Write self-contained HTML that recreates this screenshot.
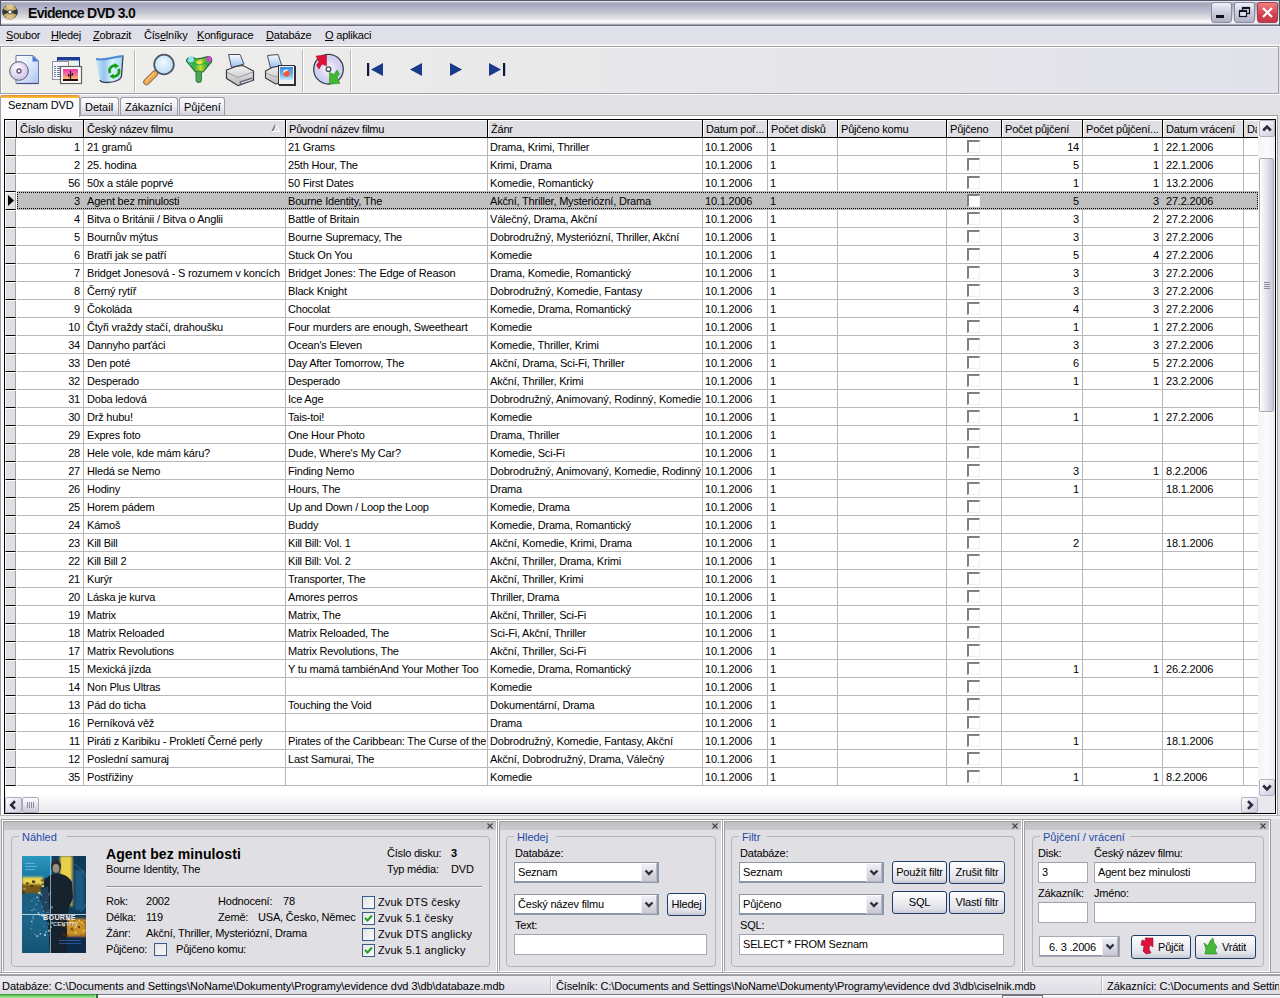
<!DOCTYPE html><html><head><meta charset="utf-8"><title>Evidence DVD 3.0</title><style>
html,body{margin:0;padding:0;}
body{width:1280px;height:998px;overflow:hidden;position:relative;background:#E0DFE3;font-family:"Liberation Sans",sans-serif;font-size:11px;color:#000;}
.a{position:absolute;box-sizing:border-box;}
.t{position:absolute;white-space:pre;line-height:normal;font-size:11px;letter-spacing:-0.2px;}
.u{text-decoration:underline;}

</style></head><body>
<div class="a" style="left:0px;top:0px;width:1280px;height:26px;background:linear-gradient(#555568 0,#555568 1px,#E8E8F5 1px,#E8E8F5 2px,#B8B8C8 2px,#A5A5BB 4px,#B0B0C8 7px,#C0C4D0 12px,#D0D4D8 15px,#E0E0E4 18px,#F0F0F4 20px,#FFFFFF 22px,#D8D8E0 24px,#6F6F7F 25px,#6F6F7F 26px);"></div>
<div class="a" style="left:0px;top:0px;width:1px;height:26px;background:#505868;"></div>
<div class="a" style="left:1279px;top:0px;width:1px;height:26px;background:#406060;"></div>
<svg class="a" style="left:2px;top:4px" width="16" height="16" viewBox="0 0 16 16"><circle cx="8" cy="8" r="7.3" fill="#C8B070" stroke="#404040" stroke-width=".6"/><path d="M8 8 L1 5 A7.3 7.3 0 0 0 1 11 Z M8 8 L15 5 A7.3 7.3 0 0 1 15 11 Z" fill="#303838"/><path d="M8 8 L4 1.5 A7.3 7.3 0 0 1 12 1.5 Z" fill="#E0C890"/><path d="M8 8 L4 14.5 A7.3 7.3 0 0 0 12 14.5 Z" fill="#D8C088"/><circle cx="8" cy="8" r="2" fill="#fff" stroke="#303030" stroke-width=".8"/></svg>
<div class="t " style="left:28px;top:5px;font-size:14px;font-weight:700;color:#0A0A0A;letter-spacing:-0.7px;">Evidence DVD 3.0</div>
<div class="a" style="left:1211px;top:2px;width:21px;height:21px;border-radius:3px;border:1px solid #8A8AA0;background:linear-gradient(#F0F0F8,#D0D0E0 45%,#B0B0C4);"></div>
<div class="a" style="left:1216px;top:15px;width:8px;height:3px;background:#101020;"></div>
<div class="a" style="left:1234px;top:2px;width:21px;height:21px;border-radius:3px;border:1px solid #8A8AA0;background:linear-gradient(#F0F0F8,#D0D0E0 45%,#B0B0C4);"></div>
<svg class="a" style="left:1234px;top:2px" width="21" height="21"><rect x="8.5" y="5.5" width="7" height="6" fill="none" stroke="#101020" stroke-width="1.2"/><path d="M8.5 6 H15.5" stroke="#101020" stroke-width="2"/><rect x="5.5" y="8.5" width="7" height="6" fill="#E0E0EA" stroke="#101020" stroke-width="1.2"/><path d="M5.5 9 H12.5" stroke="#101020" stroke-width="2"/></svg>
<div class="a" style="left:1257px;top:2px;width:21px;height:21px;border-radius:3px;border:1px solid #A04050;background:linear-gradient(#F08080,#D04050 60%,#C83848);"></div>
<svg class="a" style="left:1257px;top:2px" width="21" height="21"><path d="M6 6 L15 15 M15 6 L6 15" stroke="#fff" stroke-width="2.2"/></svg>
<div class="a" style="left:0px;top:26px;width:1280px;height:20px;background:linear-gradient(#E8E8F0 0,#E8E8F0 1px,#E0E0EA 1px,#E0E0E8 18px,#F8F8F8 19px);"></div>
<div class="t" style="left:6px;top:29px;"><span class="u">S</span>oubor</div>
<div class="t" style="left:51px;top:29px;"><span class="u">H</span>ledej</div>
<div class="t" style="left:93px;top:29px;"><span class="u">Z</span>obrazit</div>
<div class="t" style="left:144px;top:29px;">Čís<span class="u">e</span>lníky</div>
<div class="t" style="left:197px;top:29px;"><span class="u">K</span>onfigurace</div>
<div class="t" style="left:266px;top:29px;"><span class="u">D</span>atabáze</div>
<div class="t" style="left:325px;top:29px;"><span class="u">O</span> aplikaci</div>
<div class="a" style="left:0px;top:46px;width:1279px;height:48px;background:linear-gradient(90deg,#EFEFEB,#E9E9EA 40%,#E1E1EA);border:1px solid #A0A0A8;border-top-color:#A0A0A8;"></div>
<div class="a" style="left:1px;top:47px;width:1277px;height:1px;background:#FFFFFF;"></div>
<div class="a" style="left:1px;top:47px;width:1px;height:46px;background:#FFFFFF;"></div>
<div class="a" style="left:0px;top:94px;width:1280px;height:1px;background:#FFFFFF;"></div>
<div class="a" style="left:134px;top:50px;width:1px;height:42px;background:#B8B8B8;"></div>
<div class="a" style="left:135px;top:50px;width:1px;height:42px;background:#FFFFFF;"></div>
<div class="a" style="left:302px;top:50px;width:1px;height:42px;background:#B8B8B8;"></div>
<div class="a" style="left:303px;top:50px;width:1px;height:42px;background:#FFFFFF;"></div>
<div class="a" style="left:350px;top:50px;width:1px;height:42px;background:#B8B8B8;"></div>
<div class="a" style="left:351px;top:50px;width:1px;height:42px;background:#FFFFFF;"></div>
<svg class="a" style="left:0;top:0" width="520" height="94" viewBox="0 0 520 94">
<defs>
<linearGradient id="pg" x1="0" y1="0" x2="1" y2="1"><stop offset="0" stop-color="#FFFFFF"/><stop offset=".5" stop-color="#DDE8FA"/><stop offset="1" stop-color="#A8C4F0"/></linearGradient>
<radialGradient id="cd" cx=".4" cy=".35" r=".7"><stop offset="0" stop-color="#FFFFFF"/><stop offset=".5" stop-color="#E4DCF4"/><stop offset="1" stop-color="#C8C0E0"/></radialGradient>
<linearGradient id="ph" x1="0" y1="0" x2="0" y2="1"><stop offset="0" stop-color="#E83CA8"/><stop offset=".45" stop-color="#F070A0"/><stop offset=".75" stop-color="#F8B060"/><stop offset="1" stop-color="#F8F090"/></linearGradient>
<linearGradient id="bin" x1="0" y1="0" x2="1" y2="0"><stop offset="0" stop-color="#C8E8FA"/><stop offset=".3" stop-color="#98C4F0"/><stop offset=".6" stop-color="#D8F4FC"/><stop offset="1" stop-color="#A8D4F4"/></linearGradient>
<radialGradient id="lens" cx=".45" cy=".4" r=".6"><stop offset="0" stop-color="#F0FAFF"/><stop offset="1" stop-color="#B8DCF8"/></radialGradient>
<linearGradient id="fun" x1="0" y1="0" x2="1" y2="0"><stop offset="0" stop-color="#60D8F0"/><stop offset=".3" stop-color="#30B040"/><stop offset=".55" stop-color="#C8D830"/><stop offset=".8" stop-color="#30B040"/><stop offset="1" stop-color="#C040C0"/></linearGradient>
<linearGradient id="pap" x1="0" y1="0" x2="0" y2="1"><stop offset="0" stop-color="#F8FAFF"/><stop offset="1" stop-color="#98C0F0"/></linearGradient>
<linearGradient id="prn" x1="0" y1="0" x2="0" y2="1"><stop offset="0" stop-color="#F4F4F4"/><stop offset="1" stop-color="#B8B8B8"/></linearGradient>
<radialGradient id="dvd" cx=".5" cy=".5" r=".55"><stop offset="0" stop-color="#FFFFFF"/><stop offset=".6" stop-color="#D8D0F0"/><stop offset="1" stop-color="#C0D4F4"/></radialGradient>
</defs>
<!-- icon1: CD document -->
<path d="M16 55.5 L33 55.5 L38.5 61 L38.5 83.5 L16 83.5 Z" fill="url(#pg)" stroke="#6878A8" stroke-width="1"/>
<path d="M32.5 55.5 L32.5 61.5 L38.5 61.5 Z" fill="#4A78D0"/>
<path d="M17 83.5 L38.5 83.5" stroke="#4A4A90" stroke-width="1.2"/>
<circle cx="19" cy="71" r="9.3" fill="url(#cd)" stroke="#5A5A68" stroke-width="1"/>
<circle cx="19" cy="71" r="2" fill="#fff" stroke="#6A5A78" stroke-width="1.4"/>
<!-- icon2: report/photo -->
<rect x="57.5" y="57.5" width="22" height="10" fill="#E8F4E8" stroke="#1E3C96" stroke-width="1"/>
<rect x="57.5" y="57.5" width="22" height="3" fill="#1E3C96"/>
<rect x="52.5" y="61.5" width="16" height="18" fill="#F8F8FC" stroke="#909098" stroke-width="1"/>
<path d="M54 66.5 H56 M57 66.5 H61 M54 68.5 H56 M57 68.5 H61 M54 70.5 H56 M57 70.5 H60 M54 72.5 H56 M57 72.5 H60 M54 74.5 H56 M57 74.5 H60 M54 76.5 H56 M57 76.5 H60" stroke="#6A80B0" stroke-width="1"/>
<rect x="60.5" y="66.5" width="21" height="17" fill="#FFFFFF" stroke="#606060" stroke-width="1.2"/>
<rect x="63" y="69" width="15" height="12" fill="url(#ph)"/>
<rect x="63" y="79" width="15" height="2" fill="#200808"/>
<path d="M70.5 71 V79 M68.5 74 V76 H70.5 M72.5 73 V75 H70.5" stroke="#3A1020" stroke-width="1.2" fill="none"/>
<!-- icon3: recycle bin -->
<path d="M96 59 C104 60 112 54 123 55.5 L121.5 76 C121 80 114 82.5 107 82.5 C103 82.5 100.5 81.5 100 80 Z" fill="url(#bin)"/>
<path d="M123 55.5 L121.5 76 C121 80 114 82.5 107 82.5 C103 82.5 100.5 81.5 100 80" fill="none" stroke="#3A4050" stroke-width="1.3"/>
<path d="M96 59 C104 61 112 57 123 56" fill="none" stroke="#5088D8" stroke-width="2"/>
<path d="M110 73 A5.2 5.2 0 0 1 116 65.8" fill="none" stroke="#10A010" stroke-width="2.6"/>
<path d="M118.5 69 A5.2 5.2 0 0 1 112.5 76.3" fill="none" stroke="#10A010" stroke-width="2.6"/>
<path d="M114.5 63 L119 66 L115 68.5 Z" fill="#10A010"/>
<path d="M114 79 L109.5 76.5 L113.5 73.5 Z" fill="#10A010"/>
<!-- icon4: magnifier -->
<path d="M155 73.5 L146.5 82" stroke="#806050" stroke-width="6.5" stroke-linecap="round"/>
<path d="M155 73.5 L146.5 82" stroke="#F0A848" stroke-width="4.8" stroke-linecap="round"/>
<path d="M154 73 L146 81" stroke="#F8D088" stroke-width="1.2" stroke-linecap="round"/>
<circle cx="164" cy="64.5" r="9.8" fill="url(#lens)" stroke="#505868" stroke-width="1.8"/>
<!-- icon5: funnel -->
<path d="M186.5 61 C187 57 192 56.5 195 58.5 C200 60 205 57 208 56.5 C211 56.5 212.5 59 211.5 62 L203 72 L195.5 72 Z" fill="url(#fun)" stroke="#1E6A28" stroke-width="1.1"/>
<path d="M189 62 C195 65 204 65 210 61" fill="none" stroke="#30B040" stroke-width="2"/>
<rect x="196" y="71" width="5.5" height="11.5" rx="2.2" fill="#48A858" stroke="#2E7040" stroke-width=".9"/>
<circle cx="191" cy="59.5" r="3" fill="#90E4F8"/>
<circle cx="209" cy="59" r="2.8" fill="#C848C8"/>
<ellipse cx="199.5" cy="62.5" rx="3.2" ry="1.8" fill="#E8E040"/>
<!-- icon6: printer -->
<path d="M228.5 54.5 L240 54.5 L244 64 L231.5 67.5 Z" fill="url(#pap)" stroke="#4A5060" stroke-width="1"/>
<path d="M226.5 70 L236 66.5 L243 65.5 L253.5 71 L253.5 80 L238 85.5 L226.5 78.5 Z" fill="url(#prn)" stroke="#38383E" stroke-width="1.2"/>
<path d="M227 72.5 L238 77.5 L253 72" fill="none" stroke="#9A9AA4" stroke-width="1"/>
<path d="M238 77.5 L238 85" stroke="#C8C8C8" stroke-width="1"/>
<path d="M239.5 81.5 L252 77.5 L252.5 80.5 L240 84.5 Z" fill="#6A6478"/>
<path d="M241 83 L252 79.5" stroke="#F4F4F8" stroke-width="1"/>
<!-- icon7: print preview -->
<path d="M267.5 55.5 L278 54.5 L282 66 L270.5 68 Z" fill="url(#pap)" stroke="#4A5060" stroke-width="1"/>
<path d="M265.5 71 L272 67.5 L280 66 L280 83 L275.5 84 L265.5 78 Z" fill="url(#prn)" stroke="#38383E" stroke-width="1.1"/>
<path d="M266 73 L275 77 L279 76" fill="none" stroke="#A0A0A8" stroke-width="1"/>
<rect x="279" y="66" width="17" height="20" fill="#303036"/>
<rect x="278.5" y="65.5" width="16" height="19" fill="#F0F0F0" stroke="#303038" stroke-width="1"/>
<linearGradient id="pv" x1="0" y1="0" x2="0" y2="1"><stop offset="0" stop-color="#3A88DC"/><stop offset=".6" stop-color="#70B8F0"/><stop offset="1" stop-color="#C8ECFA"/></linearGradient>
<rect x="280" y="67" width="13" height="13" fill="url(#pv)"/>
<circle cx="286.5" cy="73.5" r="3.2" fill="#F05A3C"/>
<path d="M283.5 72.5 A3 3 0 0 1 287.5 70.5" fill="none" stroke="#FFFFFF" stroke-width="1.4"/>
<!-- icon8: DVD -->
<circle cx="328.5" cy="69.2" r="14.8" fill="url(#dvd)" stroke="#404048" stroke-width="1.3"/>
<path d="M316 56 L326.5 55 L326.5 66 L322 64 L319 69 L316.5 65 L319 62 Z" fill="#E0103C" stroke="#A00828" stroke-width=".5"/>
<path d="M340 83.5 L329.5 84 L329.5 72.5 L334 74.5 L337 70 L339.5 74 L337 77 Z" fill="#40B830" stroke="#208018" stroke-width=".5"/>
<circle cx="328.5" cy="69.2" r="2.3" fill="#fff" stroke="#405058" stroke-width="1.4"/>
<!-- nav -->
<rect x="367" y="63" width="2.2" height="13" fill="#101838"/>
<path d="M371 69.5 L383 63 L383 76 Z" fill="#1A3A8A"/>
<path d="M410 69.5 L422 63 L422 76 Z" fill="#1A3A8A"/>
<path d="M450 63 L462 69.5 L450 76 Z" fill="#1A3A8A"/>
<path d="M489 63 L501 69.5 L489 76 Z" fill="#1A3A8A"/>
<rect x="503" y="63" width="2.2" height="13" fill="#101838"/>
</svg>
<div class="a" style="left:1px;top:95px;width:1278px;height:20px;background:#E1E1E3;"></div>
<div class="a" style="left:80px;top:97px;width:39px;height:19px;border:1px solid #9C9CA8;border-bottom:none;border-radius:3px 3px 0 0;background:linear-gradient(#FFFFFF,#F0F0F4 45%,#D0D0DE);"></div>
<div class="t " style="left:85px;top:101px;letter-spacing:0px;">Detail</div>
<div class="a" style="left:120px;top:97px;width:58px;height:19px;border:1px solid #9C9CA8;border-bottom:none;border-radius:3px 3px 0 0;background:linear-gradient(#FFFFFF,#F0F0F4 45%,#D0D0DE);"></div>
<div class="t " style="left:125px;top:101px;letter-spacing:0px;">Zákazníci</div>
<div class="a" style="left:179px;top:97px;width:46px;height:19px;border:1px solid #9C9CA8;border-bottom:none;border-radius:3px 3px 0 0;background:linear-gradient(#FFFFFF,#F0F0F4 45%,#D0D0DE);"></div>
<div class="t " style="left:184px;top:101px;letter-spacing:0px;">Půjčení</div>
<div class="a" style="left:0px;top:115px;width:1278px;height:701px;background:#FCFCFE;border:1px solid #A0A0A0;border-bottom:none;"></div>
<div class="a" style="left:0px;top:95px;width:80px;height:22px;border:1px solid #A0A0A0;border-bottom:none;border-radius:3px 3px 0 0;background:#FCFCFE;"></div>
<div class="a" style="left:1px;top:95px;width:78px;height:3px;background:linear-gradient(#E68B2C,#FFC73C);border-radius:2px 2px 0 0;"></div>
<div class="t " style="left:8px;top:99px;letter-spacing:-0.1px;">Seznam DVD</div>
<div class="a" style="left:4px;top:119px;width:1272px;height:695px;border:1px solid #000;background:#FFFFFF;"></div>
<div class="a" style="left:5px;top:120px;width:1253px;height:17px;background:#E0DFE3;"></div>
<div class="a" style="left:5px;top:120px;width:1253px;height:1px;background:#FFFFFF;"></div>
<div class="a" style="left:5px;top:137px;width:1253px;height:1px;background:#000;"></div>
<div class="a" style="left:5px;top:120px;width:1px;height:17px;background:#FFFFFF;"></div>
<div class="a" style="left:16px;top:120px;width:1px;height:17px;background:#000;"></div>
<div class="a" style="left:17px;top:121px;width:1px;height:16px;background:#FFFFFF;"></div>
<div class="a" style="left:83px;top:120px;width:1px;height:17px;background:#000;"></div>
<div class="a" style="left:84px;top:121px;width:1px;height:16px;background:#FFFFFF;"></div>
<div class="a" style="left:285px;top:120px;width:1px;height:17px;background:#000;"></div>
<div class="a" style="left:286px;top:121px;width:1px;height:16px;background:#FFFFFF;"></div>
<div class="a" style="left:487px;top:120px;width:1px;height:17px;background:#000;"></div>
<div class="a" style="left:488px;top:121px;width:1px;height:16px;background:#FFFFFF;"></div>
<div class="a" style="left:702px;top:120px;width:1px;height:17px;background:#000;"></div>
<div class="a" style="left:703px;top:121px;width:1px;height:16px;background:#FFFFFF;"></div>
<div class="a" style="left:767px;top:120px;width:1px;height:17px;background:#000;"></div>
<div class="a" style="left:768px;top:121px;width:1px;height:16px;background:#FFFFFF;"></div>
<div class="a" style="left:837px;top:120px;width:1px;height:17px;background:#000;"></div>
<div class="a" style="left:838px;top:121px;width:1px;height:16px;background:#FFFFFF;"></div>
<div class="a" style="left:946px;top:120px;width:1px;height:17px;background:#000;"></div>
<div class="a" style="left:947px;top:121px;width:1px;height:16px;background:#FFFFFF;"></div>
<div class="a" style="left:1001px;top:120px;width:1px;height:17px;background:#000;"></div>
<div class="a" style="left:1002px;top:121px;width:1px;height:16px;background:#FFFFFF;"></div>
<div class="a" style="left:1082px;top:120px;width:1px;height:17px;background:#000;"></div>
<div class="a" style="left:1083px;top:121px;width:1px;height:16px;background:#FFFFFF;"></div>
<div class="a" style="left:1162px;top:120px;width:1px;height:17px;background:#000;"></div>
<div class="a" style="left:1163px;top:121px;width:1px;height:16px;background:#FFFFFF;"></div>
<div class="a" style="left:1243px;top:120px;width:1px;height:17px;background:#000;"></div>
<div class="t" style="left:20px;top:123px;width:62px;overflow:hidden;">Číslo disku</div>
<div class="t" style="left:87px;top:123px;width:197px;overflow:hidden;">Český název filmu</div>
<div class="t" style="left:289px;top:123px;width:197px;overflow:hidden;">Původní název filmu</div>
<div class="t" style="left:491px;top:123px;width:210px;overflow:hidden;">Žánr</div>
<div class="t" style="left:706px;top:123px;width:60px;overflow:hidden;">Datum poř...</div>
<div class="t" style="left:771px;top:123px;width:65px;overflow:hidden;">Počet disků</div>
<div class="t" style="left:841px;top:123px;width:104px;overflow:hidden;">Půjčeno komu</div>
<div class="t" style="left:950px;top:123px;width:50px;overflow:hidden;">Půjčeno</div>
<div class="t" style="left:1005px;top:123px;width:76px;overflow:hidden;">Počet půjčení</div>
<div class="t" style="left:1086px;top:123px;width:75px;overflow:hidden;">Počet půjčení...</div>
<div class="t" style="left:1166px;top:123px;width:76px;overflow:hidden;">Datum vrácení</div>
<div class="t" style="left:1247px;top:123px;width:10px;overflow:hidden;">Da</div>
<svg class="a" style="left:271px;top:124px" width="10" height="9"><path d="M1 7.5 L4.5 0.5" stroke="#606068" stroke-width="1.1"/><path d="M4.5 0.5 L8.5 7.5 L1 7.5" fill="none" stroke="#FFFFFF" stroke-width="1.1"/></svg>
<div class="a" style="left:83px;top:138px;width:1px;height:648px;background:#B8B8B8;"></div>
<div class="a" style="left:285px;top:138px;width:1px;height:648px;background:#B8B8B8;"></div>
<div class="a" style="left:487px;top:138px;width:1px;height:648px;background:#B8B8B8;"></div>
<div class="a" style="left:702px;top:138px;width:1px;height:648px;background:#B8B8B8;"></div>
<div class="a" style="left:767px;top:138px;width:1px;height:648px;background:#B8B8B8;"></div>
<div class="a" style="left:837px;top:138px;width:1px;height:648px;background:#B8B8B8;"></div>
<div class="a" style="left:946px;top:138px;width:1px;height:648px;background:#B8B8B8;"></div>
<div class="a" style="left:1001px;top:138px;width:1px;height:648px;background:#B8B8B8;"></div>
<div class="a" style="left:1082px;top:138px;width:1px;height:648px;background:#B8B8B8;"></div>
<div class="a" style="left:1162px;top:138px;width:1px;height:648px;background:#B8B8B8;"></div>
<div class="a" style="left:1243px;top:138px;width:1px;height:648px;background:#B8B8B8;"></div>
<div class="a" style="left:17px;top:155px;width:1241px;height:1px;background:#B8B8B8;"></div>
<div class="a" style="left:5px;top:138px;width:11px;height:18px;background:#E0DFE3;border-left:1px solid #fff;border-top:1px solid #fff;border-right:1px solid #A0A0A0;border-bottom:1px solid #000;"></div>
<div class="t" style="right:1200px;top:141px;text-align:right;">1</div>
<div class="t" style="left:87px;top:141px;width:197px;overflow:hidden;">21 gramů</div>
<div class="t" style="left:288px;top:141px;width:198px;overflow:hidden;">21 Grams</div>
<div class="t" style="left:490px;top:141px;width:211px;overflow:hidden;">Drama, Krimi, Thriller</div>
<div class="t " style="left:705px;top:141px;">10.1.2006</div>
<div class="t " style="left:770px;top:141px;">1</div>
<div class="a" style="left:967px;top:140px;width:13px;height:13px;border-top:2px solid #808080;border-left:2px solid #808080;border-right:1px solid #F0F0F0;border-bottom:1px solid #F0F0F0;background:#FFFFFF;"></div>
<div class="t" style="right:201px;top:141px;text-align:right;">14</div>
<div class="t" style="right:121px;top:141px;text-align:right;">1</div>
<div class="t " style="left:1166px;top:141px;">22.1.2006</div>
<div class="a" style="left:17px;top:173px;width:1241px;height:1px;background:#B8B8B8;"></div>
<div class="a" style="left:5px;top:156px;width:11px;height:18px;background:#E0DFE3;border-left:1px solid #fff;border-top:1px solid #fff;border-right:1px solid #A0A0A0;border-bottom:1px solid #000;"></div>
<div class="t" style="right:1200px;top:159px;text-align:right;">2</div>
<div class="t" style="left:87px;top:159px;width:197px;overflow:hidden;">25. hodina</div>
<div class="t" style="left:288px;top:159px;width:198px;overflow:hidden;">25th Hour, The</div>
<div class="t" style="left:490px;top:159px;width:211px;overflow:hidden;">Krimi, Drama</div>
<div class="t " style="left:705px;top:159px;">10.1.2006</div>
<div class="t " style="left:770px;top:159px;">1</div>
<div class="a" style="left:967px;top:158px;width:13px;height:13px;border-top:2px solid #808080;border-left:2px solid #808080;border-right:1px solid #F0F0F0;border-bottom:1px solid #F0F0F0;background:#FFFFFF;"></div>
<div class="t" style="right:201px;top:159px;text-align:right;">5</div>
<div class="t" style="right:121px;top:159px;text-align:right;">1</div>
<div class="t " style="left:1166px;top:159px;">22.1.2006</div>
<div class="a" style="left:17px;top:191px;width:1241px;height:1px;background:#B8B8B8;"></div>
<div class="a" style="left:5px;top:174px;width:11px;height:18px;background:#E0DFE3;border-left:1px solid #fff;border-top:1px solid #fff;border-right:1px solid #A0A0A0;border-bottom:1px solid #000;"></div>
<div class="t" style="right:1200px;top:177px;text-align:right;">56</div>
<div class="t" style="left:87px;top:177px;width:197px;overflow:hidden;">50x a stále poprvé</div>
<div class="t" style="left:288px;top:177px;width:198px;overflow:hidden;">50 First Dates</div>
<div class="t" style="left:490px;top:177px;width:211px;overflow:hidden;">Komedie, Romantický</div>
<div class="t " style="left:705px;top:177px;">10.1.2006</div>
<div class="t " style="left:770px;top:177px;">1</div>
<div class="a" style="left:967px;top:176px;width:13px;height:13px;border-top:2px solid #808080;border-left:2px solid #808080;border-right:1px solid #F0F0F0;border-bottom:1px solid #F0F0F0;background:#FFFFFF;"></div>
<div class="t" style="right:201px;top:177px;text-align:right;">1</div>
<div class="t" style="right:121px;top:177px;text-align:right;">1</div>
<div class="t " style="left:1166px;top:177px;">13.2.2006</div>
<div class="a" style="left:17px;top:209px;width:1241px;height:1px;background:#B8B8B8;"></div>
<div class="a" style="left:5px;top:192px;width:11px;height:18px;background:#E0DFE3;border-left:1px solid #fff;border-top:1px solid #fff;border-right:1px solid #A0A0A0;border-bottom:1px solid #000;"></div>
<div class="a" style="left:17px;top:192px;width:1241px;height:17px;background:#C0C0C0;"></div>
<div class="a" style="left:17px;top:192px;width:1241px;height:1px;background:repeating-linear-gradient(90deg,#000 0,#000 1px,transparent 1px,transparent 2px);"></div>
<div class="a" style="left:17px;top:208px;width:1241px;height:1px;background:repeating-linear-gradient(90deg,#000 0,#000 1px,transparent 1px,transparent 2px);"></div>
<div class="a" style="left:17px;top:192px;width:1px;height:17px;background:repeating-linear-gradient(180deg,#000 0,#000 1px,transparent 1px,transparent 2px);"></div>
<div class="a" style="left:1257px;top:192px;width:1px;height:17px;background:repeating-linear-gradient(180deg,#000 0,#000 1px,transparent 1px,transparent 2px);"></div>
<svg class="a" style="left:7px;top:194px" width="9" height="14"><path d="M1 1 L7 6.5 L1 12Z" fill="#000"/></svg>
<div class="t" style="right:1200px;top:195px;text-align:right;">3</div>
<div class="t" style="left:87px;top:195px;width:197px;overflow:hidden;">Agent bez minulosti</div>
<div class="t" style="left:288px;top:195px;width:198px;overflow:hidden;">Bourne Identity, The</div>
<div class="t" style="left:490px;top:195px;width:211px;overflow:hidden;">Akční, Thriller, Mysteriózní, Drama</div>
<div class="t " style="left:705px;top:195px;">10.1.2006</div>
<div class="t " style="left:770px;top:195px;">1</div>
<div class="a" style="left:967px;top:194px;width:13px;height:13px;border-top:2px solid #808080;border-left:2px solid #808080;border-right:1px solid #F0F0F0;border-bottom:1px solid #F0F0F0;background:#FFFFFF;"></div>
<div class="t" style="right:201px;top:195px;text-align:right;">5</div>
<div class="t" style="right:121px;top:195px;text-align:right;">3</div>
<div class="t " style="left:1166px;top:195px;">27.2.2006</div>
<div class="a" style="left:17px;top:227px;width:1241px;height:1px;background:#B8B8B8;"></div>
<div class="a" style="left:5px;top:210px;width:11px;height:18px;background:#E0DFE3;border-left:1px solid #fff;border-top:1px solid #fff;border-right:1px solid #A0A0A0;border-bottom:1px solid #000;"></div>
<div class="t" style="right:1200px;top:213px;text-align:right;">4</div>
<div class="t" style="left:87px;top:213px;width:197px;overflow:hidden;">Bitva o Británii / Bitva o Anglii</div>
<div class="t" style="left:288px;top:213px;width:198px;overflow:hidden;">Battle of Britain</div>
<div class="t" style="left:490px;top:213px;width:211px;overflow:hidden;">Válečný, Drama, Akční</div>
<div class="t " style="left:705px;top:213px;">10.1.2006</div>
<div class="t " style="left:770px;top:213px;">1</div>
<div class="a" style="left:967px;top:212px;width:13px;height:13px;border-top:2px solid #808080;border-left:2px solid #808080;border-right:1px solid #F0F0F0;border-bottom:1px solid #F0F0F0;background:#FFFFFF;"></div>
<div class="t" style="right:201px;top:213px;text-align:right;">3</div>
<div class="t" style="right:121px;top:213px;text-align:right;">2</div>
<div class="t " style="left:1166px;top:213px;">27.2.2006</div>
<div class="a" style="left:17px;top:245px;width:1241px;height:1px;background:#B8B8B8;"></div>
<div class="a" style="left:5px;top:228px;width:11px;height:18px;background:#E0DFE3;border-left:1px solid #fff;border-top:1px solid #fff;border-right:1px solid #A0A0A0;border-bottom:1px solid #000;"></div>
<div class="t" style="right:1200px;top:231px;text-align:right;">5</div>
<div class="t" style="left:87px;top:231px;width:197px;overflow:hidden;">Bournův mýtus</div>
<div class="t" style="left:288px;top:231px;width:198px;overflow:hidden;">Bourne Supremacy, The</div>
<div class="t" style="left:490px;top:231px;width:211px;overflow:hidden;">Dobrodružný, Mysteriózní, Thriller, Akční</div>
<div class="t " style="left:705px;top:231px;">10.1.2006</div>
<div class="t " style="left:770px;top:231px;">1</div>
<div class="a" style="left:967px;top:230px;width:13px;height:13px;border-top:2px solid #808080;border-left:2px solid #808080;border-right:1px solid #F0F0F0;border-bottom:1px solid #F0F0F0;background:#FFFFFF;"></div>
<div class="t" style="right:201px;top:231px;text-align:right;">3</div>
<div class="t" style="right:121px;top:231px;text-align:right;">3</div>
<div class="t " style="left:1166px;top:231px;">27.2.2006</div>
<div class="a" style="left:17px;top:263px;width:1241px;height:1px;background:#B8B8B8;"></div>
<div class="a" style="left:5px;top:246px;width:11px;height:18px;background:#E0DFE3;border-left:1px solid #fff;border-top:1px solid #fff;border-right:1px solid #A0A0A0;border-bottom:1px solid #000;"></div>
<div class="t" style="right:1200px;top:249px;text-align:right;">6</div>
<div class="t" style="left:87px;top:249px;width:197px;overflow:hidden;">Bratři jak se patří</div>
<div class="t" style="left:288px;top:249px;width:198px;overflow:hidden;">Stuck On You</div>
<div class="t" style="left:490px;top:249px;width:211px;overflow:hidden;">Komedie</div>
<div class="t " style="left:705px;top:249px;">10.1.2006</div>
<div class="t " style="left:770px;top:249px;">1</div>
<div class="a" style="left:967px;top:248px;width:13px;height:13px;border-top:2px solid #808080;border-left:2px solid #808080;border-right:1px solid #F0F0F0;border-bottom:1px solid #F0F0F0;background:#FFFFFF;"></div>
<div class="t" style="right:201px;top:249px;text-align:right;">5</div>
<div class="t" style="right:121px;top:249px;text-align:right;">4</div>
<div class="t " style="left:1166px;top:249px;">27.2.2006</div>
<div class="a" style="left:17px;top:281px;width:1241px;height:1px;background:#B8B8B8;"></div>
<div class="a" style="left:5px;top:264px;width:11px;height:18px;background:#E0DFE3;border-left:1px solid #fff;border-top:1px solid #fff;border-right:1px solid #A0A0A0;border-bottom:1px solid #000;"></div>
<div class="t" style="right:1200px;top:267px;text-align:right;">7</div>
<div class="t" style="left:87px;top:267px;width:197px;overflow:hidden;">Bridget Jonesová - S rozumem v koncích</div>
<div class="t" style="left:288px;top:267px;width:198px;overflow:hidden;">Bridget Jones: The Edge of Reason</div>
<div class="t" style="left:490px;top:267px;width:211px;overflow:hidden;">Drama, Komedie, Romantický</div>
<div class="t " style="left:705px;top:267px;">10.1.2006</div>
<div class="t " style="left:770px;top:267px;">1</div>
<div class="a" style="left:967px;top:266px;width:13px;height:13px;border-top:2px solid #808080;border-left:2px solid #808080;border-right:1px solid #F0F0F0;border-bottom:1px solid #F0F0F0;background:#FFFFFF;"></div>
<div class="t" style="right:201px;top:267px;text-align:right;">3</div>
<div class="t" style="right:121px;top:267px;text-align:right;">3</div>
<div class="t " style="left:1166px;top:267px;">27.2.2006</div>
<div class="a" style="left:17px;top:299px;width:1241px;height:1px;background:#B8B8B8;"></div>
<div class="a" style="left:5px;top:282px;width:11px;height:18px;background:#E0DFE3;border-left:1px solid #fff;border-top:1px solid #fff;border-right:1px solid #A0A0A0;border-bottom:1px solid #000;"></div>
<div class="t" style="right:1200px;top:285px;text-align:right;">8</div>
<div class="t" style="left:87px;top:285px;width:197px;overflow:hidden;">Černý rytíř</div>
<div class="t" style="left:288px;top:285px;width:198px;overflow:hidden;">Black Knight</div>
<div class="t" style="left:490px;top:285px;width:211px;overflow:hidden;">Dobrodružný, Komedie, Fantasy</div>
<div class="t " style="left:705px;top:285px;">10.1.2006</div>
<div class="t " style="left:770px;top:285px;">1</div>
<div class="a" style="left:967px;top:284px;width:13px;height:13px;border-top:2px solid #808080;border-left:2px solid #808080;border-right:1px solid #F0F0F0;border-bottom:1px solid #F0F0F0;background:#FFFFFF;"></div>
<div class="t" style="right:201px;top:285px;text-align:right;">3</div>
<div class="t" style="right:121px;top:285px;text-align:right;">3</div>
<div class="t " style="left:1166px;top:285px;">27.2.2006</div>
<div class="a" style="left:17px;top:317px;width:1241px;height:1px;background:#B8B8B8;"></div>
<div class="a" style="left:5px;top:300px;width:11px;height:18px;background:#E0DFE3;border-left:1px solid #fff;border-top:1px solid #fff;border-right:1px solid #A0A0A0;border-bottom:1px solid #000;"></div>
<div class="t" style="right:1200px;top:303px;text-align:right;">9</div>
<div class="t" style="left:87px;top:303px;width:197px;overflow:hidden;">Čokoláda</div>
<div class="t" style="left:288px;top:303px;width:198px;overflow:hidden;">Chocolat</div>
<div class="t" style="left:490px;top:303px;width:211px;overflow:hidden;">Komedie, Drama, Romantický</div>
<div class="t " style="left:705px;top:303px;">10.1.2006</div>
<div class="t " style="left:770px;top:303px;">1</div>
<div class="a" style="left:967px;top:302px;width:13px;height:13px;border-top:2px solid #808080;border-left:2px solid #808080;border-right:1px solid #F0F0F0;border-bottom:1px solid #F0F0F0;background:#FFFFFF;"></div>
<div class="t" style="right:201px;top:303px;text-align:right;">4</div>
<div class="t" style="right:121px;top:303px;text-align:right;">3</div>
<div class="t " style="left:1166px;top:303px;">27.2.2006</div>
<div class="a" style="left:17px;top:335px;width:1241px;height:1px;background:#B8B8B8;"></div>
<div class="a" style="left:5px;top:318px;width:11px;height:18px;background:#E0DFE3;border-left:1px solid #fff;border-top:1px solid #fff;border-right:1px solid #A0A0A0;border-bottom:1px solid #000;"></div>
<div class="t" style="right:1200px;top:321px;text-align:right;">10</div>
<div class="t" style="left:87px;top:321px;width:197px;overflow:hidden;">Čtyři vraždy stačí, drahoušku</div>
<div class="t" style="left:288px;top:321px;width:198px;overflow:hidden;">Four murders are enough, Sweetheart</div>
<div class="t" style="left:490px;top:321px;width:211px;overflow:hidden;">Komedie</div>
<div class="t " style="left:705px;top:321px;">10.1.2006</div>
<div class="t " style="left:770px;top:321px;">1</div>
<div class="a" style="left:967px;top:320px;width:13px;height:13px;border-top:2px solid #808080;border-left:2px solid #808080;border-right:1px solid #F0F0F0;border-bottom:1px solid #F0F0F0;background:#FFFFFF;"></div>
<div class="t" style="right:201px;top:321px;text-align:right;">1</div>
<div class="t" style="right:121px;top:321px;text-align:right;">1</div>
<div class="t " style="left:1166px;top:321px;">27.2.2006</div>
<div class="a" style="left:17px;top:353px;width:1241px;height:1px;background:#B8B8B8;"></div>
<div class="a" style="left:5px;top:336px;width:11px;height:18px;background:#E0DFE3;border-left:1px solid #fff;border-top:1px solid #fff;border-right:1px solid #A0A0A0;border-bottom:1px solid #000;"></div>
<div class="t" style="right:1200px;top:339px;text-align:right;">34</div>
<div class="t" style="left:87px;top:339px;width:197px;overflow:hidden;">Dannyho parťáci</div>
<div class="t" style="left:288px;top:339px;width:198px;overflow:hidden;">Ocean&#x27;s Eleven</div>
<div class="t" style="left:490px;top:339px;width:211px;overflow:hidden;">Komedie, Thriller, Krimi</div>
<div class="t " style="left:705px;top:339px;">10.1.2006</div>
<div class="t " style="left:770px;top:339px;">1</div>
<div class="a" style="left:967px;top:338px;width:13px;height:13px;border-top:2px solid #808080;border-left:2px solid #808080;border-right:1px solid #F0F0F0;border-bottom:1px solid #F0F0F0;background:#FFFFFF;"></div>
<div class="t" style="right:201px;top:339px;text-align:right;">3</div>
<div class="t" style="right:121px;top:339px;text-align:right;">3</div>
<div class="t " style="left:1166px;top:339px;">27.2.2006</div>
<div class="a" style="left:17px;top:371px;width:1241px;height:1px;background:#B8B8B8;"></div>
<div class="a" style="left:5px;top:354px;width:11px;height:18px;background:#E0DFE3;border-left:1px solid #fff;border-top:1px solid #fff;border-right:1px solid #A0A0A0;border-bottom:1px solid #000;"></div>
<div class="t" style="right:1200px;top:357px;text-align:right;">33</div>
<div class="t" style="left:87px;top:357px;width:197px;overflow:hidden;">Den poté</div>
<div class="t" style="left:288px;top:357px;width:198px;overflow:hidden;">Day After Tomorrow, The</div>
<div class="t" style="left:490px;top:357px;width:211px;overflow:hidden;">Akční, Drama, Sci-Fi, Thriller</div>
<div class="t " style="left:705px;top:357px;">10.1.2006</div>
<div class="t " style="left:770px;top:357px;">1</div>
<div class="a" style="left:967px;top:356px;width:13px;height:13px;border-top:2px solid #808080;border-left:2px solid #808080;border-right:1px solid #F0F0F0;border-bottom:1px solid #F0F0F0;background:#FFFFFF;"></div>
<div class="t" style="right:201px;top:357px;text-align:right;">6</div>
<div class="t" style="right:121px;top:357px;text-align:right;">5</div>
<div class="t " style="left:1166px;top:357px;">27.2.2006</div>
<div class="a" style="left:17px;top:389px;width:1241px;height:1px;background:#B8B8B8;"></div>
<div class="a" style="left:5px;top:372px;width:11px;height:18px;background:#E0DFE3;border-left:1px solid #fff;border-top:1px solid #fff;border-right:1px solid #A0A0A0;border-bottom:1px solid #000;"></div>
<div class="t" style="right:1200px;top:375px;text-align:right;">32</div>
<div class="t" style="left:87px;top:375px;width:197px;overflow:hidden;">Desperado</div>
<div class="t" style="left:288px;top:375px;width:198px;overflow:hidden;">Desperado</div>
<div class="t" style="left:490px;top:375px;width:211px;overflow:hidden;">Akční, Thriller, Krimi</div>
<div class="t " style="left:705px;top:375px;">10.1.2006</div>
<div class="t " style="left:770px;top:375px;">1</div>
<div class="a" style="left:967px;top:374px;width:13px;height:13px;border-top:2px solid #808080;border-left:2px solid #808080;border-right:1px solid #F0F0F0;border-bottom:1px solid #F0F0F0;background:#FFFFFF;"></div>
<div class="t" style="right:201px;top:375px;text-align:right;">1</div>
<div class="t" style="right:121px;top:375px;text-align:right;">1</div>
<div class="t " style="left:1166px;top:375px;">23.2.2006</div>
<div class="a" style="left:17px;top:407px;width:1241px;height:1px;background:#B8B8B8;"></div>
<div class="a" style="left:5px;top:390px;width:11px;height:18px;background:#E0DFE3;border-left:1px solid #fff;border-top:1px solid #fff;border-right:1px solid #A0A0A0;border-bottom:1px solid #000;"></div>
<div class="t" style="right:1200px;top:393px;text-align:right;">31</div>
<div class="t" style="left:87px;top:393px;width:197px;overflow:hidden;">Doba ledová</div>
<div class="t" style="left:288px;top:393px;width:198px;overflow:hidden;">Ice Age</div>
<div class="t" style="left:490px;top:393px;width:211px;overflow:hidden;">Dobrodružný, Animovaný, Rodinný, Komedie</div>
<div class="t " style="left:705px;top:393px;">10.1.2006</div>
<div class="t " style="left:770px;top:393px;">1</div>
<div class="a" style="left:967px;top:392px;width:13px;height:13px;border-top:2px solid #808080;border-left:2px solid #808080;border-right:1px solid #F0F0F0;border-bottom:1px solid #F0F0F0;background:#FFFFFF;"></div>
<div class="a" style="left:17px;top:425px;width:1241px;height:1px;background:#B8B8B8;"></div>
<div class="a" style="left:5px;top:408px;width:11px;height:18px;background:#E0DFE3;border-left:1px solid #fff;border-top:1px solid #fff;border-right:1px solid #A0A0A0;border-bottom:1px solid #000;"></div>
<div class="t" style="right:1200px;top:411px;text-align:right;">30</div>
<div class="t" style="left:87px;top:411px;width:197px;overflow:hidden;">Drž hubu!</div>
<div class="t" style="left:288px;top:411px;width:198px;overflow:hidden;">Tais-toi!</div>
<div class="t" style="left:490px;top:411px;width:211px;overflow:hidden;">Komedie</div>
<div class="t " style="left:705px;top:411px;">10.1.2006</div>
<div class="t " style="left:770px;top:411px;">1</div>
<div class="a" style="left:967px;top:410px;width:13px;height:13px;border-top:2px solid #808080;border-left:2px solid #808080;border-right:1px solid #F0F0F0;border-bottom:1px solid #F0F0F0;background:#FFFFFF;"></div>
<div class="t" style="right:201px;top:411px;text-align:right;">1</div>
<div class="t" style="right:121px;top:411px;text-align:right;">1</div>
<div class="t " style="left:1166px;top:411px;">27.2.2006</div>
<div class="a" style="left:17px;top:443px;width:1241px;height:1px;background:#B8B8B8;"></div>
<div class="a" style="left:5px;top:426px;width:11px;height:18px;background:#E0DFE3;border-left:1px solid #fff;border-top:1px solid #fff;border-right:1px solid #A0A0A0;border-bottom:1px solid #000;"></div>
<div class="t" style="right:1200px;top:429px;text-align:right;">29</div>
<div class="t" style="left:87px;top:429px;width:197px;overflow:hidden;">Expres foto</div>
<div class="t" style="left:288px;top:429px;width:198px;overflow:hidden;">One Hour Photo</div>
<div class="t" style="left:490px;top:429px;width:211px;overflow:hidden;">Drama, Thriller</div>
<div class="t " style="left:705px;top:429px;">10.1.2006</div>
<div class="t " style="left:770px;top:429px;">1</div>
<div class="a" style="left:967px;top:428px;width:13px;height:13px;border-top:2px solid #808080;border-left:2px solid #808080;border-right:1px solid #F0F0F0;border-bottom:1px solid #F0F0F0;background:#FFFFFF;"></div>
<div class="a" style="left:17px;top:461px;width:1241px;height:1px;background:#B8B8B8;"></div>
<div class="a" style="left:5px;top:444px;width:11px;height:18px;background:#E0DFE3;border-left:1px solid #fff;border-top:1px solid #fff;border-right:1px solid #A0A0A0;border-bottom:1px solid #000;"></div>
<div class="t" style="right:1200px;top:447px;text-align:right;">28</div>
<div class="t" style="left:87px;top:447px;width:197px;overflow:hidden;">Hele vole, kde mám káru?</div>
<div class="t" style="left:288px;top:447px;width:198px;overflow:hidden;">Dude, Where&#x27;s My Car?</div>
<div class="t" style="left:490px;top:447px;width:211px;overflow:hidden;">Komedie, Sci-Fi</div>
<div class="t " style="left:705px;top:447px;">10.1.2006</div>
<div class="t " style="left:770px;top:447px;">1</div>
<div class="a" style="left:967px;top:446px;width:13px;height:13px;border-top:2px solid #808080;border-left:2px solid #808080;border-right:1px solid #F0F0F0;border-bottom:1px solid #F0F0F0;background:#FFFFFF;"></div>
<div class="a" style="left:17px;top:479px;width:1241px;height:1px;background:#B8B8B8;"></div>
<div class="a" style="left:5px;top:462px;width:11px;height:18px;background:#E0DFE3;border-left:1px solid #fff;border-top:1px solid #fff;border-right:1px solid #A0A0A0;border-bottom:1px solid #000;"></div>
<div class="t" style="right:1200px;top:465px;text-align:right;">27</div>
<div class="t" style="left:87px;top:465px;width:197px;overflow:hidden;">Hledá se Nemo</div>
<div class="t" style="left:288px;top:465px;width:198px;overflow:hidden;">Finding Nemo</div>
<div class="t" style="left:490px;top:465px;width:211px;overflow:hidden;">Dobrodružný, Animovaný, Komedie, Rodinný</div>
<div class="t " style="left:705px;top:465px;">10.1.2006</div>
<div class="t " style="left:770px;top:465px;">1</div>
<div class="a" style="left:967px;top:464px;width:13px;height:13px;border-top:2px solid #808080;border-left:2px solid #808080;border-right:1px solid #F0F0F0;border-bottom:1px solid #F0F0F0;background:#FFFFFF;"></div>
<div class="t" style="right:201px;top:465px;text-align:right;">3</div>
<div class="t" style="right:121px;top:465px;text-align:right;">1</div>
<div class="t " style="left:1166px;top:465px;">8.2.2006</div>
<div class="a" style="left:17px;top:497px;width:1241px;height:1px;background:#B8B8B8;"></div>
<div class="a" style="left:5px;top:480px;width:11px;height:18px;background:#E0DFE3;border-left:1px solid #fff;border-top:1px solid #fff;border-right:1px solid #A0A0A0;border-bottom:1px solid #000;"></div>
<div class="t" style="right:1200px;top:483px;text-align:right;">26</div>
<div class="t" style="left:87px;top:483px;width:197px;overflow:hidden;">Hodiny</div>
<div class="t" style="left:288px;top:483px;width:198px;overflow:hidden;">Hours, The</div>
<div class="t" style="left:490px;top:483px;width:211px;overflow:hidden;">Drama</div>
<div class="t " style="left:705px;top:483px;">10.1.2006</div>
<div class="t " style="left:770px;top:483px;">1</div>
<div class="a" style="left:967px;top:482px;width:13px;height:13px;border-top:2px solid #808080;border-left:2px solid #808080;border-right:1px solid #F0F0F0;border-bottom:1px solid #F0F0F0;background:#FFFFFF;"></div>
<div class="t" style="right:201px;top:483px;text-align:right;">1</div>
<div class="t " style="left:1166px;top:483px;">18.1.2006</div>
<div class="a" style="left:17px;top:515px;width:1241px;height:1px;background:#B8B8B8;"></div>
<div class="a" style="left:5px;top:498px;width:11px;height:18px;background:#E0DFE3;border-left:1px solid #fff;border-top:1px solid #fff;border-right:1px solid #A0A0A0;border-bottom:1px solid #000;"></div>
<div class="t" style="right:1200px;top:501px;text-align:right;">25</div>
<div class="t" style="left:87px;top:501px;width:197px;overflow:hidden;">Horem pádem</div>
<div class="t" style="left:288px;top:501px;width:198px;overflow:hidden;">Up and Down / Loop the Loop</div>
<div class="t" style="left:490px;top:501px;width:211px;overflow:hidden;">Komedie, Drama</div>
<div class="t " style="left:705px;top:501px;">10.1.2006</div>
<div class="t " style="left:770px;top:501px;">1</div>
<div class="a" style="left:967px;top:500px;width:13px;height:13px;border-top:2px solid #808080;border-left:2px solid #808080;border-right:1px solid #F0F0F0;border-bottom:1px solid #F0F0F0;background:#FFFFFF;"></div>
<div class="a" style="left:17px;top:533px;width:1241px;height:1px;background:#B8B8B8;"></div>
<div class="a" style="left:5px;top:516px;width:11px;height:18px;background:#E0DFE3;border-left:1px solid #fff;border-top:1px solid #fff;border-right:1px solid #A0A0A0;border-bottom:1px solid #000;"></div>
<div class="t" style="right:1200px;top:519px;text-align:right;">24</div>
<div class="t" style="left:87px;top:519px;width:197px;overflow:hidden;">Kámoš</div>
<div class="t" style="left:288px;top:519px;width:198px;overflow:hidden;">Buddy</div>
<div class="t" style="left:490px;top:519px;width:211px;overflow:hidden;">Komedie, Drama, Romantický</div>
<div class="t " style="left:705px;top:519px;">10.1.2006</div>
<div class="t " style="left:770px;top:519px;">1</div>
<div class="a" style="left:967px;top:518px;width:13px;height:13px;border-top:2px solid #808080;border-left:2px solid #808080;border-right:1px solid #F0F0F0;border-bottom:1px solid #F0F0F0;background:#FFFFFF;"></div>
<div class="a" style="left:17px;top:551px;width:1241px;height:1px;background:#B8B8B8;"></div>
<div class="a" style="left:5px;top:534px;width:11px;height:18px;background:#E0DFE3;border-left:1px solid #fff;border-top:1px solid #fff;border-right:1px solid #A0A0A0;border-bottom:1px solid #000;"></div>
<div class="t" style="right:1200px;top:537px;text-align:right;">23</div>
<div class="t" style="left:87px;top:537px;width:197px;overflow:hidden;">Kill Bill</div>
<div class="t" style="left:288px;top:537px;width:198px;overflow:hidden;">Kill Bill: Vol. 1</div>
<div class="t" style="left:490px;top:537px;width:211px;overflow:hidden;">Akční, Komedie, Krimi, Drama</div>
<div class="t " style="left:705px;top:537px;">10.1.2006</div>
<div class="t " style="left:770px;top:537px;">1</div>
<div class="a" style="left:967px;top:536px;width:13px;height:13px;border-top:2px solid #808080;border-left:2px solid #808080;border-right:1px solid #F0F0F0;border-bottom:1px solid #F0F0F0;background:#FFFFFF;"></div>
<div class="t" style="right:201px;top:537px;text-align:right;">2</div>
<div class="t " style="left:1166px;top:537px;">18.1.2006</div>
<div class="a" style="left:17px;top:569px;width:1241px;height:1px;background:#B8B8B8;"></div>
<div class="a" style="left:5px;top:552px;width:11px;height:18px;background:#E0DFE3;border-left:1px solid #fff;border-top:1px solid #fff;border-right:1px solid #A0A0A0;border-bottom:1px solid #000;"></div>
<div class="t" style="right:1200px;top:555px;text-align:right;">22</div>
<div class="t" style="left:87px;top:555px;width:197px;overflow:hidden;">Kill Bill 2</div>
<div class="t" style="left:288px;top:555px;width:198px;overflow:hidden;">Kill Bill: Vol. 2</div>
<div class="t" style="left:490px;top:555px;width:211px;overflow:hidden;">Akční, Thriller, Drama, Krimi</div>
<div class="t " style="left:705px;top:555px;">10.1.2006</div>
<div class="t " style="left:770px;top:555px;">1</div>
<div class="a" style="left:967px;top:554px;width:13px;height:13px;border-top:2px solid #808080;border-left:2px solid #808080;border-right:1px solid #F0F0F0;border-bottom:1px solid #F0F0F0;background:#FFFFFF;"></div>
<div class="a" style="left:17px;top:587px;width:1241px;height:1px;background:#B8B8B8;"></div>
<div class="a" style="left:5px;top:570px;width:11px;height:18px;background:#E0DFE3;border-left:1px solid #fff;border-top:1px solid #fff;border-right:1px solid #A0A0A0;border-bottom:1px solid #000;"></div>
<div class="t" style="right:1200px;top:573px;text-align:right;">21</div>
<div class="t" style="left:87px;top:573px;width:197px;overflow:hidden;">Kurýr</div>
<div class="t" style="left:288px;top:573px;width:198px;overflow:hidden;">Transporter, The</div>
<div class="t" style="left:490px;top:573px;width:211px;overflow:hidden;">Akční, Thriller, Krimi</div>
<div class="t " style="left:705px;top:573px;">10.1.2006</div>
<div class="t " style="left:770px;top:573px;">1</div>
<div class="a" style="left:967px;top:572px;width:13px;height:13px;border-top:2px solid #808080;border-left:2px solid #808080;border-right:1px solid #F0F0F0;border-bottom:1px solid #F0F0F0;background:#FFFFFF;"></div>
<div class="a" style="left:17px;top:605px;width:1241px;height:1px;background:#B8B8B8;"></div>
<div class="a" style="left:5px;top:588px;width:11px;height:18px;background:#E0DFE3;border-left:1px solid #fff;border-top:1px solid #fff;border-right:1px solid #A0A0A0;border-bottom:1px solid #000;"></div>
<div class="t" style="right:1200px;top:591px;text-align:right;">20</div>
<div class="t" style="left:87px;top:591px;width:197px;overflow:hidden;">Láska je kurva</div>
<div class="t" style="left:288px;top:591px;width:198px;overflow:hidden;">Amores perros</div>
<div class="t" style="left:490px;top:591px;width:211px;overflow:hidden;">Thriller, Drama</div>
<div class="t " style="left:705px;top:591px;">10.1.2006</div>
<div class="t " style="left:770px;top:591px;">1</div>
<div class="a" style="left:967px;top:590px;width:13px;height:13px;border-top:2px solid #808080;border-left:2px solid #808080;border-right:1px solid #F0F0F0;border-bottom:1px solid #F0F0F0;background:#FFFFFF;"></div>
<div class="a" style="left:17px;top:623px;width:1241px;height:1px;background:#B8B8B8;"></div>
<div class="a" style="left:5px;top:606px;width:11px;height:18px;background:#E0DFE3;border-left:1px solid #fff;border-top:1px solid #fff;border-right:1px solid #A0A0A0;border-bottom:1px solid #000;"></div>
<div class="t" style="right:1200px;top:609px;text-align:right;">19</div>
<div class="t" style="left:87px;top:609px;width:197px;overflow:hidden;">Matrix</div>
<div class="t" style="left:288px;top:609px;width:198px;overflow:hidden;">Matrix, The</div>
<div class="t" style="left:490px;top:609px;width:211px;overflow:hidden;">Akční, Thriller, Sci-Fi</div>
<div class="t " style="left:705px;top:609px;">10.1.2006</div>
<div class="t " style="left:770px;top:609px;">1</div>
<div class="a" style="left:967px;top:608px;width:13px;height:13px;border-top:2px solid #808080;border-left:2px solid #808080;border-right:1px solid #F0F0F0;border-bottom:1px solid #F0F0F0;background:#FFFFFF;"></div>
<div class="a" style="left:17px;top:641px;width:1241px;height:1px;background:#B8B8B8;"></div>
<div class="a" style="left:5px;top:624px;width:11px;height:18px;background:#E0DFE3;border-left:1px solid #fff;border-top:1px solid #fff;border-right:1px solid #A0A0A0;border-bottom:1px solid #000;"></div>
<div class="t" style="right:1200px;top:627px;text-align:right;">18</div>
<div class="t" style="left:87px;top:627px;width:197px;overflow:hidden;">Matrix Reloaded</div>
<div class="t" style="left:288px;top:627px;width:198px;overflow:hidden;">Matrix Reloaded, The</div>
<div class="t" style="left:490px;top:627px;width:211px;overflow:hidden;">Sci-Fi, Akční, Thriller</div>
<div class="t " style="left:705px;top:627px;">10.1.2006</div>
<div class="t " style="left:770px;top:627px;">1</div>
<div class="a" style="left:967px;top:626px;width:13px;height:13px;border-top:2px solid #808080;border-left:2px solid #808080;border-right:1px solid #F0F0F0;border-bottom:1px solid #F0F0F0;background:#FFFFFF;"></div>
<div class="a" style="left:17px;top:659px;width:1241px;height:1px;background:#B8B8B8;"></div>
<div class="a" style="left:5px;top:642px;width:11px;height:18px;background:#E0DFE3;border-left:1px solid #fff;border-top:1px solid #fff;border-right:1px solid #A0A0A0;border-bottom:1px solid #000;"></div>
<div class="t" style="right:1200px;top:645px;text-align:right;">17</div>
<div class="t" style="left:87px;top:645px;width:197px;overflow:hidden;">Matrix Revolutions</div>
<div class="t" style="left:288px;top:645px;width:198px;overflow:hidden;">Matrix Revolutions, The</div>
<div class="t" style="left:490px;top:645px;width:211px;overflow:hidden;">Akční, Thriller, Sci-Fi</div>
<div class="t " style="left:705px;top:645px;">10.1.2006</div>
<div class="t " style="left:770px;top:645px;">1</div>
<div class="a" style="left:967px;top:644px;width:13px;height:13px;border-top:2px solid #808080;border-left:2px solid #808080;border-right:1px solid #F0F0F0;border-bottom:1px solid #F0F0F0;background:#FFFFFF;"></div>
<div class="a" style="left:17px;top:677px;width:1241px;height:1px;background:#B8B8B8;"></div>
<div class="a" style="left:5px;top:660px;width:11px;height:18px;background:#E0DFE3;border-left:1px solid #fff;border-top:1px solid #fff;border-right:1px solid #A0A0A0;border-bottom:1px solid #000;"></div>
<div class="t" style="right:1200px;top:663px;text-align:right;">15</div>
<div class="t" style="left:87px;top:663px;width:197px;overflow:hidden;">Mexická jízda</div>
<div class="t" style="left:288px;top:663px;width:198px;overflow:hidden;">Y tu mamá tambiénAnd Your Mother Too</div>
<div class="t" style="left:490px;top:663px;width:211px;overflow:hidden;">Komedie, Drama, Romantický</div>
<div class="t " style="left:705px;top:663px;">10.1.2006</div>
<div class="t " style="left:770px;top:663px;">1</div>
<div class="a" style="left:967px;top:662px;width:13px;height:13px;border-top:2px solid #808080;border-left:2px solid #808080;border-right:1px solid #F0F0F0;border-bottom:1px solid #F0F0F0;background:#FFFFFF;"></div>
<div class="t" style="right:201px;top:663px;text-align:right;">1</div>
<div class="t" style="right:121px;top:663px;text-align:right;">1</div>
<div class="t " style="left:1166px;top:663px;">26.2.2006</div>
<div class="a" style="left:17px;top:695px;width:1241px;height:1px;background:#B8B8B8;"></div>
<div class="a" style="left:5px;top:678px;width:11px;height:18px;background:#E0DFE3;border-left:1px solid #fff;border-top:1px solid #fff;border-right:1px solid #A0A0A0;border-bottom:1px solid #000;"></div>
<div class="t" style="right:1200px;top:681px;text-align:right;">14</div>
<div class="t" style="left:87px;top:681px;width:197px;overflow:hidden;">Non Plus Ultras</div>
<div class="t" style="left:288px;top:681px;width:198px;overflow:hidden;"></div>
<div class="t" style="left:490px;top:681px;width:211px;overflow:hidden;">Komedie</div>
<div class="t " style="left:705px;top:681px;">10.1.2006</div>
<div class="t " style="left:770px;top:681px;">1</div>
<div class="a" style="left:967px;top:680px;width:13px;height:13px;border-top:2px solid #808080;border-left:2px solid #808080;border-right:1px solid #F0F0F0;border-bottom:1px solid #F0F0F0;background:#FFFFFF;"></div>
<div class="a" style="left:17px;top:713px;width:1241px;height:1px;background:#B8B8B8;"></div>
<div class="a" style="left:5px;top:696px;width:11px;height:18px;background:#E0DFE3;border-left:1px solid #fff;border-top:1px solid #fff;border-right:1px solid #A0A0A0;border-bottom:1px solid #000;"></div>
<div class="t" style="right:1200px;top:699px;text-align:right;">13</div>
<div class="t" style="left:87px;top:699px;width:197px;overflow:hidden;">Pád do ticha</div>
<div class="t" style="left:288px;top:699px;width:198px;overflow:hidden;">Touching the Void</div>
<div class="t" style="left:490px;top:699px;width:211px;overflow:hidden;">Dokumentární, Drama</div>
<div class="t " style="left:705px;top:699px;">10.1.2006</div>
<div class="t " style="left:770px;top:699px;">1</div>
<div class="a" style="left:967px;top:698px;width:13px;height:13px;border-top:2px solid #808080;border-left:2px solid #808080;border-right:1px solid #F0F0F0;border-bottom:1px solid #F0F0F0;background:#FFFFFF;"></div>
<div class="a" style="left:17px;top:731px;width:1241px;height:1px;background:#B8B8B8;"></div>
<div class="a" style="left:5px;top:714px;width:11px;height:18px;background:#E0DFE3;border-left:1px solid #fff;border-top:1px solid #fff;border-right:1px solid #A0A0A0;border-bottom:1px solid #000;"></div>
<div class="t" style="right:1200px;top:717px;text-align:right;">16</div>
<div class="t" style="left:87px;top:717px;width:197px;overflow:hidden;">Perníková věž</div>
<div class="t" style="left:288px;top:717px;width:198px;overflow:hidden;"></div>
<div class="t" style="left:490px;top:717px;width:211px;overflow:hidden;">Drama</div>
<div class="t " style="left:705px;top:717px;">10.1.2006</div>
<div class="t " style="left:770px;top:717px;">1</div>
<div class="a" style="left:967px;top:716px;width:13px;height:13px;border-top:2px solid #808080;border-left:2px solid #808080;border-right:1px solid #F0F0F0;border-bottom:1px solid #F0F0F0;background:#FFFFFF;"></div>
<div class="a" style="left:17px;top:749px;width:1241px;height:1px;background:#B8B8B8;"></div>
<div class="a" style="left:5px;top:732px;width:11px;height:18px;background:#E0DFE3;border-left:1px solid #fff;border-top:1px solid #fff;border-right:1px solid #A0A0A0;border-bottom:1px solid #000;"></div>
<div class="t" style="right:1200px;top:735px;text-align:right;">11</div>
<div class="t" style="left:87px;top:735px;width:197px;overflow:hidden;">Piráti z Karibiku - Prokletí Černé perly</div>
<div class="t" style="left:288px;top:735px;width:198px;overflow:hidden;">Pirates of the Caribbean: The Curse of the</div>
<div class="t" style="left:490px;top:735px;width:211px;overflow:hidden;">Dobrodružný, Komedie, Fantasy, Akční</div>
<div class="t " style="left:705px;top:735px;">10.1.2006</div>
<div class="t " style="left:770px;top:735px;">1</div>
<div class="a" style="left:967px;top:734px;width:13px;height:13px;border-top:2px solid #808080;border-left:2px solid #808080;border-right:1px solid #F0F0F0;border-bottom:1px solid #F0F0F0;background:#FFFFFF;"></div>
<div class="t" style="right:201px;top:735px;text-align:right;">1</div>
<div class="t " style="left:1166px;top:735px;">18.1.2006</div>
<div class="a" style="left:17px;top:767px;width:1241px;height:1px;background:#B8B8B8;"></div>
<div class="a" style="left:5px;top:750px;width:11px;height:18px;background:#E0DFE3;border-left:1px solid #fff;border-top:1px solid #fff;border-right:1px solid #A0A0A0;border-bottom:1px solid #000;"></div>
<div class="t" style="right:1200px;top:753px;text-align:right;">12</div>
<div class="t" style="left:87px;top:753px;width:197px;overflow:hidden;">Poslední samuraj</div>
<div class="t" style="left:288px;top:753px;width:198px;overflow:hidden;">Last Samurai, The</div>
<div class="t" style="left:490px;top:753px;width:211px;overflow:hidden;">Akční, Dobrodružný, Drama, Válečný</div>
<div class="t " style="left:705px;top:753px;">10.1.2006</div>
<div class="t " style="left:770px;top:753px;">1</div>
<div class="a" style="left:967px;top:752px;width:13px;height:13px;border-top:2px solid #808080;border-left:2px solid #808080;border-right:1px solid #F0F0F0;border-bottom:1px solid #F0F0F0;background:#FFFFFF;"></div>
<div class="a" style="left:17px;top:785px;width:1241px;height:1px;background:#B8B8B8;"></div>
<div class="a" style="left:5px;top:768px;width:11px;height:18px;background:#E0DFE3;border-left:1px solid #fff;border-top:1px solid #fff;border-right:1px solid #A0A0A0;border-bottom:1px solid #000;"></div>
<div class="t" style="right:1200px;top:771px;text-align:right;">35</div>
<div class="t" style="left:87px;top:771px;width:197px;overflow:hidden;">Postřižiny</div>
<div class="t" style="left:288px;top:771px;width:198px;overflow:hidden;"></div>
<div class="t" style="left:490px;top:771px;width:211px;overflow:hidden;">Komedie</div>
<div class="t " style="left:705px;top:771px;">10.1.2006</div>
<div class="t " style="left:770px;top:771px;">1</div>
<div class="a" style="left:967px;top:770px;width:13px;height:13px;border-top:2px solid #808080;border-left:2px solid #808080;border-right:1px solid #F0F0F0;border-bottom:1px solid #F0F0F0;background:#FFFFFF;"></div>
<div class="t" style="right:201px;top:771px;text-align:right;">1</div>
<div class="t" style="right:121px;top:771px;text-align:right;">1</div>
<div class="t " style="left:1166px;top:771px;">8.2.2006</div>
<div class="a" style="left:1258px;top:120px;width:17px;height:676px;background:linear-gradient(90deg,#F4F4F8,#FBFBFD 50%,#F0F0F4);"></div>
<div class="a" style="left:1259px;top:120px;width:16px;height:17px;border:1px solid #B0B0C0;border-radius:2px;background:linear-gradient(135deg,#FFFFFF 0%,#E4E4F0 50%,#CCCCDC 100%);"></div><svg class="a" style="left:0;top:0" width="1280" height="998" viewBox="0 0 1280 998"><path d="M1263.2 130.5 L1267.0 126.7 L1270.8 130.5" fill="none" stroke="#2A2A38" stroke-width="2.6"/></svg>
<div class="a" style="left:1259px;top:779px;width:16px;height:17px;border:1px solid #B0B0C0;border-radius:2px;background:linear-gradient(135deg,#FFFFFF 0%,#E4E4F0 50%,#CCCCDC 100%);"></div><svg class="a" style="left:0;top:0" width="1280" height="998" viewBox="0 0 1280 998"><path d="M1263.2 785.5 L1267.0 789.3 L1270.8 785.5" fill="none" stroke="#2A2A38" stroke-width="2.6"/></svg>
<div class="a" style="left:1259px;top:158px;width:15px;height:254px;border:1px solid #A8A8B8;border-radius:2px;background:linear-gradient(90deg,#FFFFFF,#E4E4EC 50%,#C8C8D8);"></div>
<div class="a" style="left:1264px;top:282px;width:6px;height:1px;background:#8C8CA0;"></div>
<div class="a" style="left:1264px;top:284px;width:6px;height:1px;background:#8C8CA0;"></div>
<div class="a" style="left:1264px;top:286px;width:6px;height:1px;background:#8C8CA0;"></div>
<div class="a" style="left:1264px;top:288px;width:6px;height:1px;background:#8C8CA0;"></div>
<div class="a" style="left:5px;top:796px;width:1253px;height:17px;background:linear-gradient(#FBFBFD,#F0F0F4 60%,#E8E8EE);"></div>
<div class="a" style="left:5px;top:797px;width:17px;height:16px;border:1px solid #B0B0C0;border-radius:2px;background:linear-gradient(135deg,#FFFFFF 0%,#E4E4F0 50%,#CCCCDC 100%);"></div><svg class="a" style="left:0;top:0" width="1280" height="998" viewBox="0 0 1280 998"><path d="M15.0 801.2 L11.2 805.0 L15.0 808.8" fill="none" stroke="#2A2A38" stroke-width="2.6"/></svg>
<div class="a" style="left:1241px;top:797px;width:17px;height:16px;border:1px solid #B0B0C0;border-radius:2px;background:linear-gradient(135deg,#FFFFFF 0%,#E4E4F0 50%,#CCCCDC 100%);"></div><svg class="a" style="left:0;top:0" width="1280" height="998" viewBox="0 0 1280 998"><path d="M1248.0 801.2 L1251.8 805.0 L1248.0 808.8" fill="none" stroke="#2A2A38" stroke-width="2.6"/></svg>
<div class="a" style="left:22px;top:797px;width:17px;height:16px;border:1px solid #A8A8B8;border-radius:2px;background:linear-gradient(#FFFFFF,#E4E4EC 50%,#C8C8D8);"></div>
<div class="a" style="left:27px;top:802px;width:1px;height:6px;background:#8C8CA0;"></div>
<div class="a" style="left:29px;top:802px;width:1px;height:6px;background:#8C8CA0;"></div>
<div class="a" style="left:31px;top:802px;width:1px;height:6px;background:#8C8CA0;"></div>
<div class="a" style="left:33px;top:802px;width:1px;height:6px;background:#8C8CA0;"></div>
<div class="a" style="left:1258px;top:796px;width:17px;height:17px;background:#E8E8EE;"></div>
<div class="a" style="left:0px;top:815px;width:1280px;height:1px;background:#B8B8B8;"></div>
<div class="a" style="left:0px;top:816px;width:1280px;height:3px;background:#ECECEE;"></div>
<div class="a" style="left:1270px;top:819px;width:10px;height:155px;background:#E0DFE3;"></div>
<div class="a" style="left:1270px;top:819px;width:1px;height:153px;background:#A0A0A0;"></div>
<div class="a" style="left:0px;top:972px;width:1280px;height:1px;background:#A0A0A0;"></div>
<div class="a" style="left:0px;top:973px;width:1280px;height:1px;background:#FFFFFF;"></div>
<div class="a" style="left:1px;top:819px;width:496px;height:153px;background:#E0DFE3;"></div>
<div class="a" style="left:1px;top:819px;width:496px;height:1px;background:#A0A0A0;"></div>
<div class="a" style="left:1px;top:819px;width:1px;height:153px;background:#A0A0A0;"></div>
<div class="a" style="left:2px;top:820px;width:495px;height:1px;background:#FFFFFF;"></div>
<div class="a" style="left:2px;top:820px;width:1px;height:152px;background:#FFFFFF;"></div>
<div class="a" style="left:3px;top:821px;width:494px;height:1px;background:#A0A0A0;"></div>
<div class="a" style="left:3px;top:821px;width:1px;height:151px;background:#A0A0A0;"></div>
<div class="a" style="left:496px;top:820px;width:1px;height:152px;background:#FFFFFF;"></div>
<div class="a" style="left:2px;top:971px;width:495px;height:1px;background:#FFFFFF;"></div>
<div class="a" style="left:4px;top:822px;width:492px;height:8px;background:linear-gradient(#C0C0C4,#CACACE);"></div>
<svg class="a" style="left:487px;top:823px" width="8" height="8"><path d="M0.5 0.5 L5.5 5.5 M5.5 0.5 L0.5 5.5" stroke="#4A3848" stroke-width="1.1"/></svg>
<div class="a" style="left:497px;top:819px;width:225px;height:153px;background:#E0DFE3;"></div>
<div class="a" style="left:497px;top:819px;width:225px;height:1px;background:#A0A0A0;"></div>
<div class="a" style="left:497px;top:819px;width:1px;height:153px;background:#A0A0A0;"></div>
<div class="a" style="left:498px;top:820px;width:224px;height:1px;background:#FFFFFF;"></div>
<div class="a" style="left:498px;top:820px;width:1px;height:152px;background:#FFFFFF;"></div>
<div class="a" style="left:499px;top:821px;width:223px;height:1px;background:#A0A0A0;"></div>
<div class="a" style="left:499px;top:821px;width:1px;height:151px;background:#A0A0A0;"></div>
<div class="a" style="left:721px;top:820px;width:1px;height:152px;background:#FFFFFF;"></div>
<div class="a" style="left:498px;top:971px;width:224px;height:1px;background:#FFFFFF;"></div>
<div class="a" style="left:500px;top:822px;width:221px;height:8px;background:linear-gradient(#C0C0C4,#CACACE);"></div>
<svg class="a" style="left:712px;top:823px" width="8" height="8"><path d="M0.5 0.5 L5.5 5.5 M5.5 0.5 L0.5 5.5" stroke="#4A3848" stroke-width="1.1"/></svg>
<div class="a" style="left:722px;top:819px;width:300px;height:153px;background:#E0DFE3;"></div>
<div class="a" style="left:722px;top:819px;width:300px;height:1px;background:#A0A0A0;"></div>
<div class="a" style="left:722px;top:819px;width:1px;height:153px;background:#A0A0A0;"></div>
<div class="a" style="left:723px;top:820px;width:299px;height:1px;background:#FFFFFF;"></div>
<div class="a" style="left:723px;top:820px;width:1px;height:152px;background:#FFFFFF;"></div>
<div class="a" style="left:724px;top:821px;width:298px;height:1px;background:#A0A0A0;"></div>
<div class="a" style="left:724px;top:821px;width:1px;height:151px;background:#A0A0A0;"></div>
<div class="a" style="left:1021px;top:820px;width:1px;height:152px;background:#FFFFFF;"></div>
<div class="a" style="left:723px;top:971px;width:299px;height:1px;background:#FFFFFF;"></div>
<div class="a" style="left:725px;top:822px;width:296px;height:8px;background:linear-gradient(#C0C0C4,#CACACE);"></div>
<svg class="a" style="left:1012px;top:823px" width="8" height="8"><path d="M0.5 0.5 L5.5 5.5 M5.5 0.5 L0.5 5.5" stroke="#4A3848" stroke-width="1.1"/></svg>
<div class="a" style="left:1022px;top:819px;width:248px;height:153px;background:#E0DFE3;"></div>
<div class="a" style="left:1022px;top:819px;width:248px;height:1px;background:#A0A0A0;"></div>
<div class="a" style="left:1022px;top:819px;width:1px;height:153px;background:#A0A0A0;"></div>
<div class="a" style="left:1023px;top:820px;width:247px;height:1px;background:#FFFFFF;"></div>
<div class="a" style="left:1023px;top:820px;width:1px;height:152px;background:#FFFFFF;"></div>
<div class="a" style="left:1024px;top:821px;width:246px;height:1px;background:#A0A0A0;"></div>
<div class="a" style="left:1024px;top:821px;width:1px;height:151px;background:#A0A0A0;"></div>
<div class="a" style="left:1269px;top:820px;width:1px;height:152px;background:#FFFFFF;"></div>
<div class="a" style="left:1023px;top:971px;width:247px;height:1px;background:#FFFFFF;"></div>
<div class="a" style="left:1025px;top:822px;width:244px;height:8px;background:linear-gradient(#C0C0C4,#CACACE);"></div>
<svg class="a" style="left:1260px;top:823px" width="8" height="8"><path d="M0.5 0.5 L5.5 5.5 M5.5 0.5 L0.5 5.5" stroke="#4A3848" stroke-width="1.1"/></svg>
<div class="a" style="left:11px;top:836px;width:479px;height:131px;border:1px solid #B4B4BC;border-radius:4px;"></div>
<div class="a" style="left:19px;top:833px;width:0px;height:6px;"></div>
<div class="a" style="left:19px;top:832px;width:48px;height:10px;background:#E0DFE3;"></div>
<div class="t" style="left:22px;top:831px;color:#1E4AA8;letter-spacing:0px;">Náhled</div>
<svg class="a" style="left:22px;top:856px" width="64" height="97" viewBox="0 0 64 97">
<defs>
<filter id="bl" x="-20%" y="-20%" width="140%" height="140%"><feGaussianBlur stdDeviation="1.3"/></filter>
<filter id="bl2" x="-10%" y="-10%" width="120%" height="120%"><feGaussianBlur stdDeviation=".7"/></filter>
<linearGradient id="ptl" x1="0" y1="0" x2="0" y2="1"><stop offset="0" stop-color="#2A98C0"/><stop offset="1" stop-color="#1A78A0"/></linearGradient>
<linearGradient id="pbl" x1="0" y1="0" x2="0" y2="1"><stop offset="0" stop-color="#1A5C80"/><stop offset=".5" stop-color="#1C6488"/><stop offset="1" stop-color="#145474"/></linearGradient>
</defs>
<rect width="64" height="97" fill="#123E5C"/>
<rect x="0" y="0" width="30" height="22" fill="url(#ptl)"/>
<rect x="0" y="36" width="30" height="61" fill="url(#pbl)"/>
<g filter="url(#bl)">
<rect x="0" y="21" width="21" height="8" fill="#E8D450"/>
<rect x="0" y="28" width="19" height="9" fill="#7A5A18"/>
<rect x="38" y="0" width="12" height="50" fill="#EAD048"/>
<rect x="51" y="0" width="13" height="62" fill="#0E3A58"/>
<rect x="53" y="14" width="9" height="40" fill="#1C5A80"/>
<rect x="38" y="63" width="26" height="17" fill="#C89028"/>
<rect x="34" y="80" width="30" height="17" fill="#0C2A48"/>
</g>
<g filter="url(#bl2)">
<path d="M20 30 C23 21 29 18 33 18 C39 17 46 19 50 26 L51 42 L47 52 L45 64 L45 97 L28 97 L26 70 L22 54 L18 42 Z" fill="#16222E"/>
<path d="M18 34 L26 30 L28 60 L20 56 Z" fill="#2A5070" opacity=".7"/>
<ellipse cx="34" cy="10.5" rx="5" ry="7" fill="#2A2A30"/>
<ellipse cx="34" cy="12.5" rx="3.4" ry="4.4" fill="#9A9080"/>
</g>
<rect x="15.1" y="40.9" width="1" height="1" fill="#8CC8E0" opacity=".8"/>
<rect x="26.1" y="38.3" width="1" height="1" fill="#8CC8E0" opacity=".8"/>
<rect x="8.8" y="53.9" width="1" height="1" fill="#8CC8E0" opacity=".8"/>
<rect x="10.0" y="53.5" width="1" height="1" fill="#8CC8E0" opacity=".8"/>
<rect x="21.9" y="60.8" width="2" height="2" fill="#8CC8E0" opacity=".8"/>
<rect x="9.1" y="44.2" width="1.5" height="1.5" fill="#5AA0C0" opacity=".8"/>
<rect x="17.2" y="58.9" width="1" height="1" fill="#B8E0F0" opacity=".8"/>
<rect x="10.3" y="60.3" width="1.5" height="1.5" fill="#5AA0C0" opacity=".8"/>
<rect x="10.1" y="66.8" width="1" height="1" fill="#8CC8E0" opacity=".8"/>
<rect x="18.9" y="58.5" width="2" height="2" fill="#B8E0F0" opacity=".8"/>
<rect x="20.9" y="54.8" width="1" height="1" fill="#B8E0F0" opacity=".8"/>
<rect x="25.5" y="66.2" width="1" height="1" fill="#5AA0C0" opacity=".8"/>
<rect x="20.6" y="58.2" width="2" height="2" fill="#B8E0F0" opacity=".8"/>
<rect x="14.3" y="79.1" width="2" height="2" fill="#8CC8E0" opacity=".8"/>
<rect x="11.6" y="49.7" width="2" height="2" fill="#2C6A88" opacity=".8"/>
<rect x="8.9" y="64.7" width="1.5" height="1.5" fill="#B8E0F0" opacity=".8"/>
<rect x="23.3" y="61.3" width="1" height="1" fill="#2C6A88" opacity=".8"/>
<rect x="26.5" y="77.5" width="1" height="1" fill="#2C6A88" opacity=".8"/>
<rect x="9.3" y="66.3" width="1.5" height="1.5" fill="#2C6A88" opacity=".8"/>
<rect x="23.8" y="74.8" width="1" height="1" fill="#B8E0F0" opacity=".8"/>
<rect x="28.7" y="50.4" width="2" height="2" fill="#8CC8E0" opacity=".8"/>
<rect x="9.3" y="69.3" width="1" height="1" fill="#5AA0C0" opacity=".8"/>
<rect x="16.8" y="76.2" width="1" height="1" fill="#2C6A88" opacity=".8"/>
<rect x="11.7" y="52.5" width="1" height="1" fill="#B8E0F0" opacity=".8"/>
<rect x="26.0" y="73.7" width="2" height="2" fill="#B8E0F0" opacity=".8"/>
<rect x="29.7" y="65.4" width="1" height="1" fill="#2C6A88" opacity=".8"/>
<rect x="11.3" y="42.1" width="1" height="1" fill="#5AA0C0" opacity=".8"/>
<rect x="8.3" y="72.2" width="1.5" height="1.5" fill="#5AA0C0" opacity=".8"/>
<rect x="14.2" y="40.7" width="1.5" height="1.5" fill="#B8E0F0" opacity=".8"/>
<rect x="29.0" y="65.8" width="2" height="2" fill="#8CC8E0" opacity=".8"/>
<rect x="27.8" y="69.9" width="2" height="2" fill="#2C6A88" opacity=".8"/>
<rect x="16.8" y="38.8" width="1" height="1" fill="#2C6A88" opacity=".8"/>
<rect x="12.2" y="79.3" width="1" height="1" fill="#2C6A88" opacity=".8"/>
<rect x="10.4" y="61.6" width="1" height="1" fill="#8CC8E0" opacity=".8"/>
<rect x="20.5" y="58.7" width="1" height="1" fill="#B8E0F0" opacity=".8"/>
<rect x="9.5" y="43.6" width="1" height="1" fill="#2C6A88" opacity=".8"/>
<rect x="22.0" y="78.0" width="2" height="2" fill="#B8E0F0" opacity=".8"/>
<rect x="10.7" y="73.1" width="2" height="2" fill="#2C6A88" opacity=".8"/>
<rect x="18.6" y="38.0" width="1.5" height="1.5" fill="#8CC8E0" opacity=".8"/>
<rect x="24.3" y="56.0" width="1" height="1" fill="#5AA0C0" opacity=".8"/>
<rect x="12.5" y="77.8" width="1" height="1" fill="#B8E0F0" opacity=".8"/>
<rect x="23.2" y="76.1" width="1" height="1" fill="#B8E0F0" opacity=".8"/>
<rect x="23.3" y="46.0" width="1" height="1" fill="#B8E0F0" opacity=".8"/>
<rect x="15.8" y="44.2" width="1" height="1" fill="#B8E0F0" opacity=".8"/>
<rect x="21.5" y="70.3" width="1" height="1" fill="#5AA0C0" opacity=".8"/>
<rect x="26.0" y="68.0" width="1" height="1" fill="#5AA0C0" opacity=".8"/>
<rect x="19.4" y="50.4" width="1" height="1" fill="#8CC8E0" opacity=".8"/>
<rect x="25.4" y="55.7" width="1.5" height="1.5" fill="#5AA0C0" opacity=".8"/>
<rect x="17.8" y="77.1" width="1.5" height="1.5" fill="#B8E0F0" opacity=".8"/>
<rect x="9.8" y="38.7" width="1" height="1" fill="#2C6A88" opacity=".8"/>
<rect x="15.4" y="56.2" width="2" height="2" fill="#8CC8E0" opacity=".8"/>
<rect x="28.0" y="49.8" width="1" height="1" fill="#8CC8E0" opacity=".8"/>
<rect x="28.0" y="70.0" width="2" height="2" fill="#5AA0C0" opacity=".8"/>
<rect x="27.6" y="54.0" width="1" height="1" fill="#B8E0F0" opacity=".8"/>
<rect x="25.6" y="78.7" width="2" height="2" fill="#2C6A88" opacity=".8"/>
<rect x="16.8" y="77.6" width="1" height="1" fill="#5AA0C0" opacity=".8"/>
<rect x="29.8" y="35.3" width="1" height="1" fill="#2C6A88" opacity=".8"/>
<rect x="21.5" y="61.4" width="1.5" height="1.5" fill="#2C6A88" opacity=".8"/>
<rect x="11.4" y="59.2" width="1" height="1" fill="#8CC8E0" opacity=".8"/>
<rect x="25.6" y="67.4" width="1" height="1" fill="#8CC8E0" opacity=".8"/>
<rect x="17.5" y="74.1" width="1" height="1" fill="#5AA0C0" opacity=".8"/>
<rect x="13.5" y="47.5" width="1.5" height="1.5" fill="#5AA0C0" opacity=".8"/>
<rect x="13.7" y="53.3" width="1" height="1" fill="#5AA0C0" opacity=".8"/>
<rect x="28.0" y="50.3" width="2" height="2" fill="#2C6A88" opacity=".8"/>
<rect x="26.2" y="74.4" width="1" height="1" fill="#5AA0C0" opacity=".8"/>
<rect x="19.5" y="34.9" width="1" height="1" fill="#2C6A88" opacity=".8"/>
<rect x="21.4" y="69.7" width="1" height="1" fill="#5AA0C0" opacity=".8"/>
<rect x="11.1" y="62.5" width="1" height="1" fill="#8CC8E0" opacity=".8"/>
<rect x="15.2" y="57.8" width="1" height="1" fill="#2C6A88" opacity=".8"/>
<rect x="27.4" y="36.6" width="1.5" height="1.5" fill="#5AA0C0" opacity=".8"/>
<rect x="39.1" y="63.8" width="2" height="2" fill="#503010" opacity=".8"/>
<rect x="52.6" y="75.7" width="2" height="2" fill="#F0D060" opacity=".8"/>
<rect x="49.5" y="73.0" width="2" height="2" fill="#A06018" opacity=".8"/>
<rect x="56.0" y="70.1" width="2" height="2" fill="#503010" opacity=".8"/>
<rect x="51.2" y="66.5" width="2" height="2" fill="#E8B040" opacity=".8"/>
<rect x="62.0" y="78.1" width="2" height="2" fill="#A06018" opacity=".8"/>
<rect x="59.8" y="64.5" width="2" height="2" fill="#F0D060" opacity=".8"/>
<rect x="48.2" y="67.7" width="2" height="2" fill="#A06018" opacity=".8"/>
<rect x="49.1" y="65.8" width="2" height="2" fill="#E8B040" opacity=".8"/>
<rect x="58.4" y="78.1" width="2" height="2" fill="#A06018" opacity=".8"/>
<rect x="62.4" y="73.6" width="2" height="2" fill="#E8B040" opacity=".8"/>
<rect x="41.7" y="77.9" width="2" height="2" fill="#503010" opacity=".8"/>
<rect x="43.7" y="79.1" width="2" height="2" fill="#503010" opacity=".8"/>
<rect x="61.0" y="64.9" width="2" height="2" fill="#A06018" opacity=".8"/>
<rect x="42.2" y="69.8" width="2" height="2" fill="#503010" opacity=".8"/>
<rect x="46.8" y="65.5" width="2" height="2" fill="#E8B040" opacity=".8"/>
<rect x="40.4" y="68.6" width="2" height="2" fill="#E8B040" opacity=".8"/>
<rect x="52.4" y="69.9" width="2" height="2" fill="#F0D060" opacity=".8"/>
<rect x="48.0" y="71.3" width="2" height="2" fill="#E8B040" opacity=".8"/>
<rect x="51.3" y="63.2" width="2" height="2" fill="#A06018" opacity=".8"/>
<rect x="63.3" y="63.9" width="2" height="2" fill="#E8B040" opacity=".8"/>
<rect x="45.1" y="78.3" width="2" height="2" fill="#A06018" opacity=".8"/>
<rect x="45.0" y="64.3" width="2" height="2" fill="#503010" opacity=".8"/>
<rect x="60.1" y="74.2" width="2" height="2" fill="#E8B040" opacity=".8"/>
<rect x="48.6" y="71.7" width="2" height="2" fill="#503010" opacity=".8"/>
<rect x="56.2" y="63.6" width="2" height="2" fill="#F0D060" opacity=".8"/>
<rect x="58.8" y="65.3" width="2" height="2" fill="#F0D060" opacity=".8"/>
<rect x="45.0" y="62.3" width="2" height="2" fill="#F0D060" opacity=".8"/>
<rect x="58.8" y="63.5" width="2" height="2" fill="#A06018" opacity=".8"/>
<rect x="39.7" y="77.5" width="2" height="2" fill="#503010" opacity=".8"/>
<rect x="0.2" y="35.9" width="2.5" height="2" fill="#403010" opacity=".9"/>
<rect x="18.5" y="25.8" width="2.5" height="2" fill="#F0E070" opacity=".9"/>
<rect x="0.9" y="31.9" width="2.5" height="2" fill="#F0E070" opacity=".9"/>
<rect x="19.4" y="25.7" width="2.5" height="2" fill="#F0E070" opacity=".9"/>
<rect x="4.0" y="26.4" width="2.5" height="2" fill="#403010" opacity=".9"/>
<rect x="10.6" y="24.9" width="2.5" height="2" fill="#403010" opacity=".9"/>
<rect x="10.0" y="24.5" width="2.5" height="2" fill="#403010" opacity=".9"/>
<rect x="16.1" y="35.9" width="2.5" height="2" fill="#F0E070" opacity=".9"/>
<rect x="0.3" y="32.3" width="2.5" height="2" fill="#806020" opacity=".9"/>
<rect x="19.6" y="29.2" width="2.5" height="2" fill="#F0E070" opacity=".9"/>
<rect x="18.7" y="23.5" width="2.5" height="2" fill="#806020" opacity=".9"/>
<rect x="8.6" y="28.9" width="2.5" height="2" fill="#403010" opacity=".9"/>
<rect x="19.4" y="26.3" width="2.5" height="2" fill="#F0E070" opacity=".9"/>
<rect x="19.6" y="26.8" width="2.5" height="2" fill="#806020" opacity=".9"/>
<rect x="0" y="58" width="64" height="1" fill="#C8DCE8" opacity=".9"/>
<rect x="28" y="0" width="1" height="97" fill="#A8C8D8" opacity=".75"/>
<text x="21" y="63.5" font-family="Liberation Sans" font-weight="bold" font-size="7.2" fill="#F0F0F0" letter-spacing=".3">BOURNE</text>
<text x="31" y="69.5" font-family="Liberation Sans" font-weight="bold" font-size="5.8" fill="#D8D8D8" letter-spacing=".1">CENTITY</text>
<rect x="37" y="84" width="22" height="1" fill="#3A70C0" opacity=".7"/>
<rect x="37" y="87" width="22" height="1" fill="#3A70C0" opacity=".6"/>
<rect x="3" y="7" width="10" height="1" fill="#A0D8F0" opacity=".5"/>
<rect x="3" y="10" width="12" height="1" fill="#A0D8F0" opacity=".5"/>
<rect x="3" y="13" width="10" height="1" fill="#A0D8F0" opacity=".5"/>
<path d="M52 8 A30 30 0 0 1 58 56" fill="none" stroke="#5A9AC0" stroke-width=".6" opacity=".7"/>
</svg>
<div class="t" style="left:106px;top:846px;font-size:14px;font-weight:700;letter-spacing:0.1px;">Agent bez minulosti</div>
<div class="t" style="left:106px;top:863px;">Bourne Identity, The</div>
<div class="t" style="left:387px;top:847px;">Číslo disku:</div>
<div class="t" style="left:451px;top:847px;font-weight:700;">3</div>
<div class="t" style="left:387px;top:863px;">Typ média:</div>
<div class="t" style="left:451px;top:863px;">DVD</div>
<div class="a" style="left:106px;top:886px;width:376px;height:1px;background:#909098;"></div>
<div class="a" style="left:106px;top:887px;width:376px;height:1px;background:#F4F4F6;"></div>
<div class="t" style="left:106px;top:895px;">Rok:</div>
<div class="t" style="left:146px;top:895px;">2002</div>
<div class="t" style="left:218px;top:895px;">Hodnocení:</div>
<div class="t" style="left:283px;top:895px;">78</div>
<div class="t" style="left:106px;top:911px;">Délka:</div>
<div class="t" style="left:146px;top:911px;">119</div>
<div class="t" style="left:218px;top:911px;">Země:</div>
<div class="t" style="left:258px;top:911px;">USA, Česko, Němec</div>
<div class="t" style="left:106px;top:927px;">Žánr:</div>
<div class="t" style="left:146px;top:927px;">Akční, Thriller, Mysteriózní, Drama</div>
<div class="t" style="left:106px;top:943px;">Půjčeno:</div>
<div class="a" style="left:154px;top:943px;width:13px;height:13px;border:1px solid #3A5C88;background:linear-gradient(135deg,#E4E4E2,#FAFAFA);"></div>
<div class="t" style="left:176px;top:943px;">Půjčeno komu:</div>
<div class="a" style="left:362px;top:896px;width:13px;height:13px;border:1px solid #3A5C88;background:linear-gradient(135deg,#E4E4E2,#FAFAFA);"></div>
<div class="t" style="left:378px;top:896px;letter-spacing:0.15px;">Zvuk DTS česky</div>
<div class="a" style="left:362px;top:912px;width:13px;height:13px;border:1px solid #3A5C88;background:linear-gradient(135deg,#E4E4E2,#FAFAFA);"></div>
<svg class="a" style="left:362px;top:912px" width="13" height="13"><path d="M3 6 L5.5 8.5 L10 3.5" fill="none" stroke="#21A121" stroke-width="2"/></svg>
<div class="t" style="left:378px;top:912px;letter-spacing:0.15px;">Zvuk 5.1 česky</div>
<div class="a" style="left:362px;top:928px;width:13px;height:13px;border:1px solid #3A5C88;background:linear-gradient(135deg,#E4E4E2,#FAFAFA);"></div>
<div class="t" style="left:378px;top:928px;letter-spacing:0.15px;">Zvuk DTS anglicky</div>
<div class="a" style="left:362px;top:944px;width:13px;height:13px;border:1px solid #3A5C88;background:linear-gradient(135deg,#E4E4E2,#FAFAFA);"></div>
<svg class="a" style="left:362px;top:944px" width="13" height="13"><path d="M3 6 L5.5 8.5 L10 3.5" fill="none" stroke="#21A121" stroke-width="2"/></svg>
<div class="t" style="left:378px;top:944px;letter-spacing:0.15px;">Zvuk 5.1 anglicky</div>
<div class="a" style="left:506px;top:836px;width:210px;height:131px;border:1px solid #B4B4BC;border-radius:4px;"></div>
<div class="a" style="left:514px;top:833px;width:0px;height:6px;"></div>
<div class="a" style="left:514px;top:832px;width:42px;height:10px;background:#E0DFE3;"></div>
<div class="t" style="left:517px;top:831px;color:#1E4AA8;letter-spacing:0px;">Hledej</div>
<div class="t" style="left:515px;top:847px;">Databáze:</div>
<div class="a" style="left:514px;top:862px;width:145px;height:21px;border:1px solid #8C96A4;border-right-width:2px;border-bottom-width:2px;background:#fff;"></div>
<div class="a" style="left:641px;top:863px;width:16px;height:19px;border:1px solid #B8B8C4;border-top-color:#FFFFFF;border-left-color:#F0F0F4;background:linear-gradient(#F0F0F6,#DCDCE6 50%,#C8C8D4);"></div>
<svg class="a" style="left:0;top:0" width="1280" height="998"><path d="M645.5 870.5 L649 874.0 L652.5 870.5" fill="none" stroke="#30303A" stroke-width="2.4"/></svg>
<div class="t" style="left:518px;top:866px;">Seznam</div>
<div class="a" style="left:514px;top:894px;width:145px;height:21px;border:1px solid #8C96A4;border-right-width:2px;border-bottom-width:2px;background:#fff;"></div>
<div class="a" style="left:641px;top:895px;width:16px;height:19px;border:1px solid #B8B8C4;border-top-color:#FFFFFF;border-left-color:#F0F0F4;background:linear-gradient(#F0F0F6,#DCDCE6 50%,#C8C8D4);"></div>
<svg class="a" style="left:0;top:0" width="1280" height="998"><path d="M645.5 902.5 L649 906.0 L652.5 902.5" fill="none" stroke="#30303A" stroke-width="2.4"/></svg>
<div class="t" style="left:518px;top:898px;">Český název filmu</div>
<div class="a" style="left:667px;top:893px;width:39px;height:23px;border:1px solid #1E3E6A;border-radius:3px;background:linear-gradient(#FFFFFF,#F0F0F4 40%,#E0E0E8 80%,#C8C8D4);"></div>
<div class="t" style="left:667px;top:898px;width:39px;text-align:center;">Hledej</div>
<div class="t" style="left:515px;top:919px;">Text:</div>
<div class="a" style="left:514px;top:934px;width:193px;height:21px;border:1px solid #A8A8B0;border-top-color:#A0A0A8;background:#fff;"></div>
<div class="a" style="left:731px;top:836px;width:284px;height:131px;border:1px solid #B4B4BC;border-radius:4px;"></div>
<div class="a" style="left:739px;top:833px;width:0px;height:6px;"></div>
<div class="a" style="left:739px;top:832px;width:28px;height:10px;background:#E0DFE3;"></div>
<div class="t" style="left:742px;top:831px;color:#1E4AA8;letter-spacing:0px;">Filtr</div>
<div class="t" style="left:740px;top:847px;">Databáze:</div>
<div class="a" style="left:739px;top:862px;width:145px;height:21px;border:1px solid #8C96A4;border-right-width:2px;border-bottom-width:2px;background:#fff;"></div>
<div class="a" style="left:866px;top:863px;width:16px;height:19px;border:1px solid #B8B8C4;border-top-color:#FFFFFF;border-left-color:#F0F0F4;background:linear-gradient(#F0F0F6,#DCDCE6 50%,#C8C8D4);"></div>
<svg class="a" style="left:0;top:0" width="1280" height="998"><path d="M870.5 870.5 L874 874.0 L877.5 870.5" fill="none" stroke="#30303A" stroke-width="2.4"/></svg>
<div class="t" style="left:743px;top:866px;">Seznam</div>
<div class="a" style="left:739px;top:894px;width:145px;height:21px;border:1px solid #8C96A4;border-right-width:2px;border-bottom-width:2px;background:#fff;"></div>
<div class="a" style="left:866px;top:895px;width:16px;height:19px;border:1px solid #B8B8C4;border-top-color:#FFFFFF;border-left-color:#F0F0F4;background:linear-gradient(#F0F0F6,#DCDCE6 50%,#C8C8D4);"></div>
<svg class="a" style="left:0;top:0" width="1280" height="998"><path d="M870.5 902.5 L874 906.0 L877.5 902.5" fill="none" stroke="#30303A" stroke-width="2.4"/></svg>
<div class="t" style="left:743px;top:898px;">Půjčeno</div>
<div class="a" style="left:892px;top:861px;width:55px;height:23px;border:1px solid #1E3E6A;border-radius:3px;background:linear-gradient(#FFFFFF,#F0F0F4 40%,#E0E0E8 80%,#C8C8D4);"></div>
<div class="t" style="left:892px;top:866px;width:55px;text-align:center;">Použít filtr</div>
<div class="a" style="left:949px;top:861px;width:56px;height:23px;border:1px solid #1E3E6A;border-radius:3px;background:linear-gradient(#FFFFFF,#F0F0F4 40%,#E0E0E8 80%,#C8C8D4);"></div>
<div class="t" style="left:949px;top:866px;width:56px;text-align:center;">Zrušit filtr</div>
<div class="a" style="left:892px;top:891px;width:55px;height:23px;border:1px solid #1E3E6A;border-radius:3px;background:linear-gradient(#FFFFFF,#F0F0F4 40%,#E0E0E8 80%,#C8C8D4);"></div>
<div class="t" style="left:892px;top:896px;width:55px;text-align:center;">SQL</div>
<div class="a" style="left:949px;top:891px;width:56px;height:23px;border:1px solid #1E3E6A;border-radius:3px;background:linear-gradient(#FFFFFF,#F0F0F4 40%,#E0E0E8 80%,#C8C8D4);"></div>
<div class="t" style="left:949px;top:896px;width:56px;text-align:center;">Vlastí filtr</div>
<div class="t" style="left:740px;top:919px;">SQL:</div>
<div class="a" style="left:739px;top:934px;width:265px;height:21px;border:1px solid #A8A8B0;border-top-color:#A0A0A8;background:#fff;"></div>
<div class="t" style="left:743px;top:938px;">SELECT * FROM Seznam</div>
<div class="a" style="left:1032px;top:836px;width:232px;height:131px;border:1px solid #B4B4BC;border-radius:4px;"></div>
<div class="a" style="left:1040px;top:833px;width:0px;height:6px;"></div>
<div class="a" style="left:1040px;top:832px;width:90px;height:10px;background:#E0DFE3;"></div>
<div class="t" style="left:1043px;top:831px;color:#1E4AA8;letter-spacing:0px;">Půjčení / vrácení</div>
<div class="t" style="left:1038px;top:847px;">Disk:</div>
<div class="t" style="left:1094px;top:847px;">Český název filmu:</div>
<div class="a" style="left:1038px;top:862px;width:50px;height:21px;border:1px solid #A8A8B0;border-top-color:#A0A0A8;background:#fff;"></div>
<div class="t" style="left:1042px;top:866px;">3</div>
<div class="a" style="left:1094px;top:862px;width:162px;height:21px;border:1px solid #A8A8B0;border-top-color:#A0A0A8;background:#fff;"></div>
<div class="t" style="left:1098px;top:866px;">Agent bez minulosti</div>
<div class="t" style="left:1038px;top:887px;">Zákazník:</div>
<div class="t" style="left:1094px;top:887px;">Jméno:</div>
<div class="a" style="left:1038px;top:902px;width:50px;height:21px;border:1px solid #A8A8B0;border-top-color:#A0A0A8;background:#fff;"></div>
<div class="a" style="left:1094px;top:902px;width:162px;height:21px;border:1px solid #A8A8B0;border-top-color:#A0A0A8;background:#fff;"></div>
<div class="a" style="left:1039px;top:936px;width:81px;height:21px;border:1px solid #8C96A4;border-right-width:2px;border-bottom-width:2px;background:#fff;"></div>
<div class="a" style="left:1102px;top:937px;width:16px;height:19px;border:1px solid #B8B8C4;border-top-color:#FFFFFF;border-left-color:#F0F0F4;background:linear-gradient(#F0F0F6,#DCDCE6 50%,#C8C8D4);"></div>
<svg class="a" style="left:0;top:0" width="1280" height="998"><path d="M1106.5 944.5 L1110 948.0 L1113.5 944.5" fill="none" stroke="#30303A" stroke-width="2.4"/></svg>
<div class="a" style="left:1039px;top:936px;width:81px;height:21px;border:1px solid #A8A8B4;"></div>
<div class="t" style="left:1049px;top:941px;">6. 3 .2006</div>
<div class="a" style="left:1131px;top:935px;width:60px;height:24px;border:1px solid #1E3E6A;border-radius:3px;background:linear-gradient(#FFFFFF,#F0F0F4 40%,#E0E0E8 80%,#C8C8D4);"></div>
<div class="t" style="left:1158px;top:941px;">Půjčit</div>
<svg class="a" style="left:1138px;top:937px" width="16" height="18"><path d="M4 3 L8 4 L7 1 L15 1 L15 10 L12 8 L11 12 L13 16 L8 17 L5 14 L6 9 L3 8 Z" fill="#E0103C" stroke="#901030" stroke-width=".6"/></svg>
<div class="a" style="left:1195px;top:935px;width:61px;height:24px;border:1px solid #1E3E6A;border-radius:3px;background:linear-gradient(#FFFFFF,#F0F0F4 40%,#E0E0E8 80%,#C8C8D4);"></div>
<div class="t" style="left:1222px;top:941px;">Vrátit</div>
<svg class="a" style="left:1202px;top:937px" width="16" height="18"><path d="M2 6 L6 9 L8 4 L11 1 L12 6 L15 10 L13 13 L15 17 L3 17 L4 12 Z" fill="#48B838" stroke="#1E7A1E" stroke-width=".6"/></svg>
<div class="a" style="left:0px;top:974px;width:1280px;height:2px;background:#A0A0A8;"></div>
<div class="a" style="left:0px;top:976px;width:1280px;height:18px;background:linear-gradient(#ECECF0,#E4E4EA 50%,#DCDCE2);"></div>
<div class="t" style="left:2px;top:980px;letter-spacing:-0.06px;">Databáze: C:\Documents and Settings\NoName\Dokumenty\Programy\evidence dvd 3\db\databaze.mdb</div>
<div class="a" style="left:550px;top:977px;width:1px;height:16px;background:#B8B8C0;"></div>
<div class="a" style="left:551px;top:977px;width:1px;height:16px;background:#FFFFFF;"></div>
<div class="t" style="left:556px;top:980px;letter-spacing:-0.13px;">Číselník: C:\Documents and Settings\NoName\Dokumenty\Programy\evidence dvd 3\db\ciselnik.mdb</div>
<div class="a" style="left:1101px;top:977px;width:1px;height:16px;background:#B8B8C0;"></div>
<div class="a" style="left:1102px;top:977px;width:1px;height:16px;background:#FFFFFF;"></div>
<div class="t" style="left:1107px;top:980px;letter-spacing:-0.06px;width:172px;overflow:hidden;">Zákazníci: C:\Documents and Settings\NoName\Dokumenty\Programy\evidence dvd 3\db\zakaznici.mdb</div>
<div class="a" style="left:0px;top:994px;width:1280px;height:1px;background:#787884;"></div>
<div class="a" style="left:0px;top:995px;width:1280px;height:2px;background:#FAFAFA;"></div>
<div class="a" style="left:0px;top:997px;width:1280px;height:1px;background:#E8E8EC;"></div>
<div class="a" style="left:0px;top:994px;width:96px;height:4px;background:linear-gradient(#208A20,#60C060 30%,#A8F098);border-radius:0 5px 0 0;"></div>
<div class="a" style="left:96px;top:994px;width:2px;height:4px;background:#2A6A2A;"></div>
<div class="a" style="left:1002px;top:995px;width:41px;height:3px;border:1px solid #707080;border-bottom:none;background:#F0F0F4;"></div>
</body></html>
